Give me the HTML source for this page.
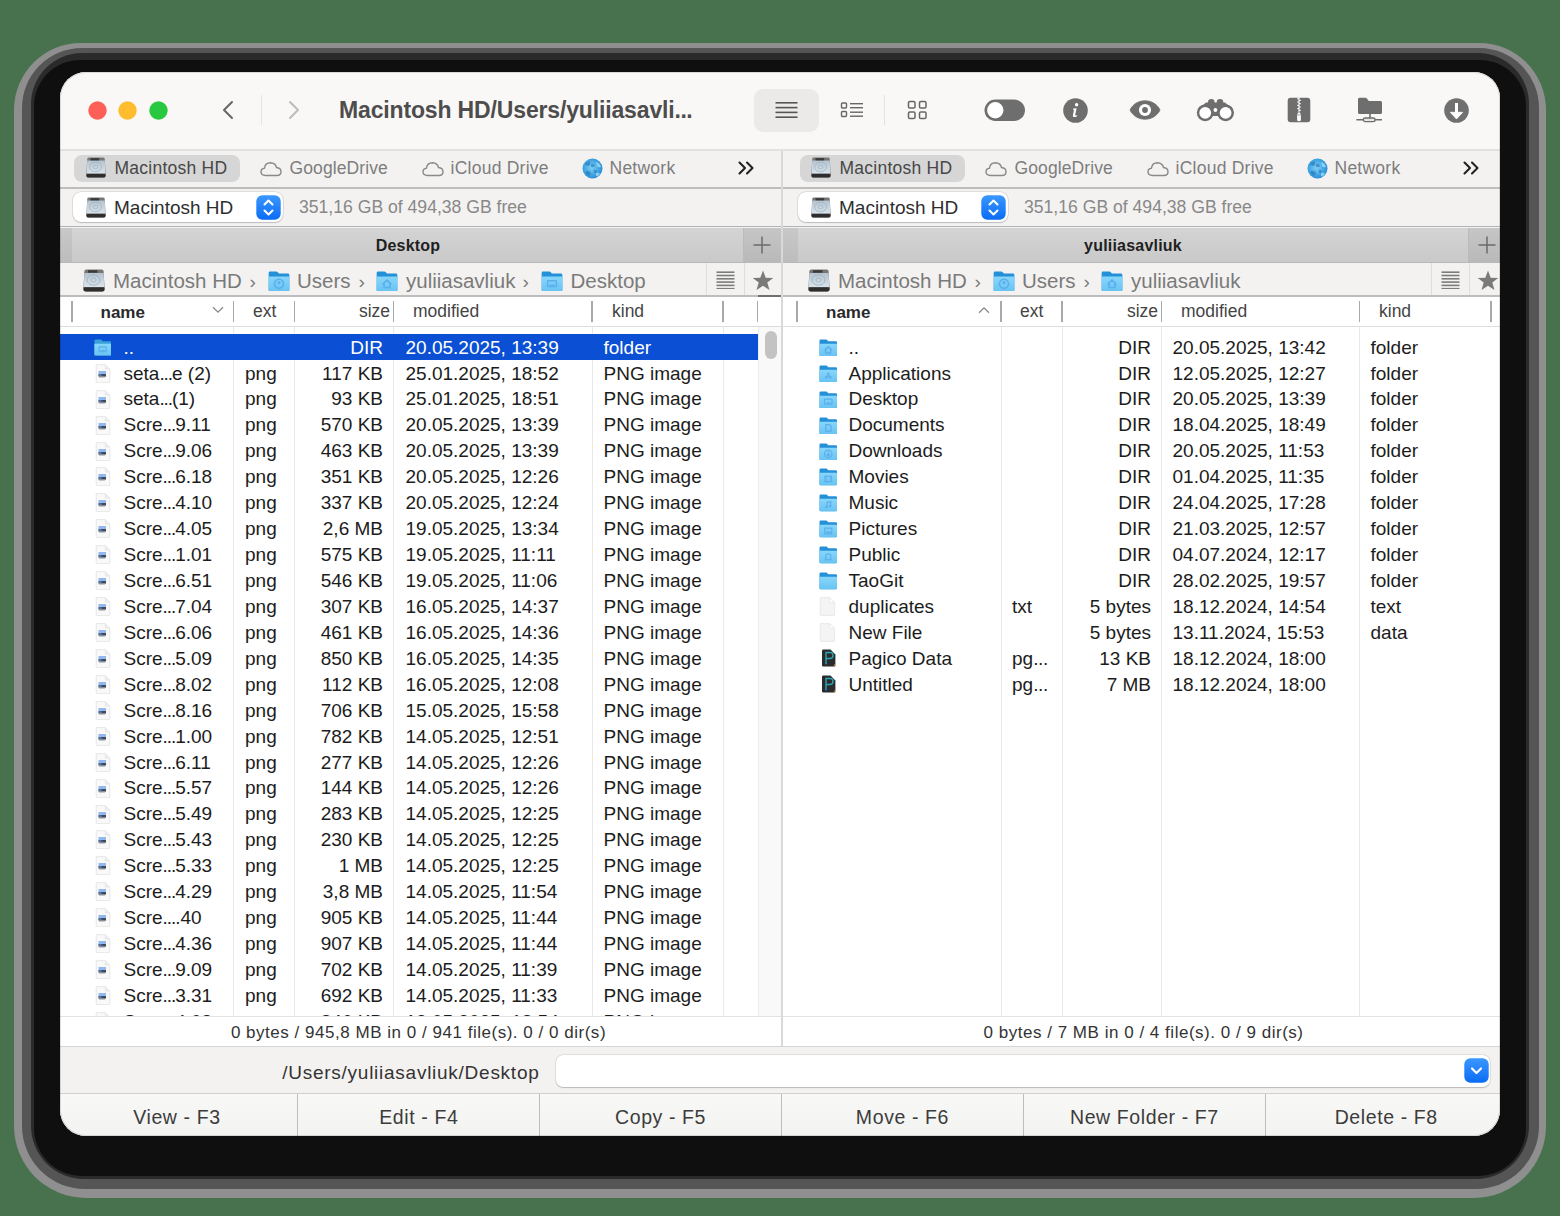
<!DOCTYPE html><html><head><meta charset="utf-8"><style>

*{margin:0;padding:0;box-sizing:border-box}
html,body{width:1560px;height:1216px;overflow:hidden;background:#48724e;font-family:"Liberation Sans",sans-serif}
.abs{position:absolute}
.sh{position:absolute}
#win{position:absolute;left:60px;top:72px;width:1440px;height:1064px;border-radius:26px;overflow:hidden;background:#f3f2f1}
.t{position:absolute;white-space:nowrap;line-height:1}
.el{letter-spacing:-1.1px}

</style></head><body>
<div class="sh" style="left:14px;top:43px;width:1532px;height:1155px;border-radius:67px 67px 72px 72px;background:#8f8f8f"></div>
<div class="sh" style="left:21.5px;top:47.5px;width:1517.0px;height:1141.5px;border-radius:60px 60px 63px 63px;background:#555555"></div>
<div class="sh" style="left:30.7px;top:52.5px;width:1498.6px;height:1126.5px;border-radius:51px 51px 53px 53px;background:#2a2a2a"></div>
<div class="sh" style="left:34px;top:59.5px;width:1492px;height:1116.5px;border-radius:46px 46px 48px 48px;background:#0f0f0f"></div>
<div id="win">
<svg width="0" height="0" style="position:absolute"><defs>
<linearGradient id="hdg" x1="0" y1="0" x2="0" y2="1"><stop offset="0" stop-color="#b3c3cf"/><stop offset="1" stop-color="#d9e5ed"/></linearGradient>
<linearGradient id="fldg" x1="0" y1="0" x2="0" y2="1"><stop offset="0" stop-color="#88d6fb"/><stop offset="1" stop-color="#68c3f2"/></linearGradient>
<linearGradient id="blueg" x1="0" y1="0" x2="0" y2="1"><stop offset="0" stop-color="#3b97ff"/><stop offset="1" stop-color="#0a6cf5"/></linearGradient>
<radialGradient id="globeg" cx="0.45" cy="0.45" r="0.6"><stop offset="0" stop-color="#7fd0f6"/><stop offset="0.7" stop-color="#3c9fe0"/><stop offset="1" stop-color="#2a86d0"/></radialGradient>
</defs></svg>
<div class="abs" style="left:0.00px;top:0.00px;width:1440.00px;height:78.00px;background:#f9f8f7"></div>
<div class="abs" style="left:0.00px;top:77.00px;width:1440.00px;height:1.50px;background:#e2e1e0"></div>
<svg class="abs" style="left:27.50px;top:28.50px;" width="19" height="19" viewBox="0 0 19 19"><circle cx="9.5" cy="9.5" r="9.2" fill="#fe5f57"/></svg>
<svg class="abs" style="left:58.00px;top:28.50px;" width="19" height="19" viewBox="0 0 19 19"><circle cx="9.5" cy="9.5" r="9.2" fill="#febc2e"/></svg>
<svg class="abs" style="left:88.50px;top:28.50px;" width="19" height="19" viewBox="0 0 19 19"><circle cx="9.5" cy="9.5" r="9.2" fill="#28c840"/></svg>
<svg class="abs" style="left:158.00px;top:28.00px;" width="20" height="20" viewBox="0 0 20 20"><path d="M14 2 L6 10 L14 18" fill="none" stroke="#666" stroke-width="2" stroke-linecap="round" stroke-linejoin="round"/></svg>
<div class="abs" style="left:200.50px;top:23.00px;width:1.00px;height:30.00px;background:#e6e5e4"></div>
<svg class="abs" style="left:224.00px;top:28.00px;" width="20" height="20" viewBox="0 0 20 20"><path d="M6 2 L14 10 L6 18" fill="none" stroke="#bcbcbc" stroke-width="2" stroke-linecap="round" stroke-linejoin="round"/></svg>
<div class="t" style="left:279.00px;top:26.53px;font-size:23px;color:#4d4d4d;font-weight:bold;letter-spacing:-0.15px">Macintosh HD/Users/yuliiasavli<span style="letter-spacing:-0.5px">...</span></div>
<div class="abs" style="left:694.00px;top:16.50px;width:64.50px;height:43.00px;background:#ebeae9;border-radius:9px"></div>
<svg class="abs" style="left:715.00px;top:29.00px;" width="23" height="18" viewBox="0 0 23 18"><rect x="0.5" y="1.0" width="22" height="1.6" fill="#555"/><rect x="0.5" y="5.8" width="22" height="1.6" fill="#555"/><rect x="0.5" y="10.6" width="22" height="1.6" fill="#555"/><rect x="0.5" y="15.4" width="22" height="1.6" fill="#555"/></svg>
<svg class="abs" style="left:780.00px;top:28.00px;" width="24" height="20" viewBox="0 0 24 20"><rect x="1.5" y="3" width="5" height="5" rx="1" fill="none" stroke="#666" stroke-width="1.4"/><rect x="1.5" y="11.5" width="5" height="5" rx="1" fill="none" stroke="#666" stroke-width="1.4"/><rect x="10" y="3" width="13" height="1.4" fill="#666"/><rect x="10" y="7" width="13" height="1.4" fill="#666"/><rect x="10" y="11.5" width="13" height="1.4" fill="#666"/><rect x="10" y="15.5" width="13" height="1.4" fill="#666"/></svg>
<div class="abs" style="left:824.00px;top:23.00px;width:1.00px;height:29.50px;background:#e3e2e1"></div>
<svg class="abs" style="left:847.00px;top:28.00px;" width="22" height="21" viewBox="0 0 22 21"><rect x="1.5" y="1.5" width="6.5" height="6.5" rx="1.3" fill="none" stroke="#666" stroke-width="1.5"/><rect x="12.5" y="1.5" width="6.5" height="6.5" rx="1.3" fill="none" stroke="#666" stroke-width="1.5"/><rect x="1.5" y="12" width="6.5" height="6.5" rx="1.3" fill="none" stroke="#666" stroke-width="1.5"/><rect x="12.5" y="12" width="6.5" height="6.5" rx="1.3" fill="none" stroke="#666" stroke-width="1.5"/></svg>
<svg class="abs" style="left:924.00px;top:26.50px;" width="42" height="23" viewBox="0 0 42 23"><rect x="0.5" y="0.5" width="40.5" height="21.5" rx="10.8" fill="#6e6e6e"/><circle cx="11.3" cy="11.3" r="8.8" fill="#fff" stroke="#6e6e6e" stroke-width="1.2"/></svg>
<svg class="abs" style="left:1002.50px;top:25.50px;" width="25" height="25" viewBox="0 0 25 25"><circle cx="12.5" cy="12.5" r="12.3" fill="#6e6e6e"/><circle cx="13.6" cy="6.8" r="1.7" fill="#fff"/><path d="M10.3 10.6 L13.6 10.2 L12.2 16.8 Q12 18 13.3 17.4 L14.2 17 L14 18.2 Q12 19.3 10.6 19 Q9.6 18.6 9.9 17.2 L11 12 L10.1 11.8 Z" fill="#fff"/></svg>
<svg class="abs" style="left:1069.00px;top:27.00px;" width="32" height="22" viewBox="0 0 32 22"><path d="M1 11 C7 -1.3 25 -1.3 31 11 C25 23.3 7 23.3 1 11 Z" fill="#6e6e6e" stroke="#6e6e6e" stroke-width="0.8" stroke-linejoin="round"/><circle cx="16" cy="11" r="6.1" fill="#fff"/><circle cx="16" cy="11" r="2.9" fill="#6e6e6e"/></svg>
<svg class="abs" style="left:1136.00px;top:26.00px;" width="39" height="24" viewBox="0 0 39 24"><g fill="#6e6e6e"><circle cx="9.2" cy="14.8" r="8.4"/><circle cx="29.6" cy="14.8" r="8.4"/><circle cx="15.3" cy="4.3" r="3.3"/><circle cx="24" cy="4.3" r="3.3"/><path d="M3 10.5 L10 4.5 L29 4.5 L36 10.5 L33 18 L6 18Z"/></g><circle cx="9.2" cy="14.8" r="5.9" fill="#fff"/><circle cx="29.6" cy="14.8" r="5.9" fill="#fff"/><circle cx="19.4" cy="12" r="1.9" fill="#fff"/></svg>
<svg class="abs" style="left:1227.00px;top:25.00px;" width="25" height="26" viewBox="0 0 25 26"><rect x="0.7" y="0.7" width="22.6" height="24.6" rx="3" fill="#6e6e6e"/><rect x="11.5" y="0" width="1" height="15" fill="#fff"/><rect x="10.2" y="1.20" width="1.9" height="1.05" fill="#fff"/><rect x="11.9" y="2.85" width="1.9" height="1.05" fill="#fff"/><rect x="10.2" y="4.50" width="1.9" height="1.05" fill="#fff"/><rect x="11.9" y="6.15" width="1.9" height="1.05" fill="#fff"/><rect x="10.2" y="7.80" width="1.9" height="1.05" fill="#fff"/><rect x="11.9" y="9.45" width="1.9" height="1.05" fill="#fff"/><rect x="10.2" y="11.10" width="1.9" height="1.05" fill="#fff"/><rect x="11.9" y="12.75" width="1.9" height="1.05" fill="#fff"/><path d="M10.1 23.6 Q9.7 19 10.9 15.6 L13.1 15.6 Q14.3 19 13.9 23.6 Q12 25 10.1 23.6Z" fill="#fff"/><circle cx="12" cy="18" r="0.7" fill="#6e6e6e"/></svg>
<svg class="abs" style="left:1295.00px;top:25.00px;" width="28" height="26" viewBox="0 0 28 26"><path d="M3 2.3 Q3 0.8 4.5 0.8 L10.5 0.8 Q11.3 0.8 11.9 1.5 L13.8 4 L25.5 4 Q27 4 27 5.5 L27 15.5 Q27 17 25.5 17 L4.5 17 Q3 17 3 15.5 Z" fill="#6e6e6e"/><rect x="14.2" y="16.5" width="1.6" height="5" fill="#6e6e6e"/><rect x="1.4" y="22" width="25.6" height="1.5" fill="#6e6e6e"/><rect x="8.3" y="21" width="11.8" height="3.7" rx="1.85" fill="#e6e6e6" stroke="#6e6e6e" stroke-width="1.3"/></svg>
<svg class="abs" style="left:1384.00px;top:25.50px;" width="25" height="25" viewBox="0 0 25 25"><circle cx="12.5" cy="12.5" r="12.3" fill="#707070"/><rect x="11" y="5" width="3" height="10" fill="#fff"/><path d="M6.3 14.3 L18.7 14.3 L12.5 21 Z" fill="#fff" stroke="#fff" stroke-width="0.8" stroke-linejoin="round"/></svg>
<div class="abs" style="left:0.00px;top:78.50px;width:1440.00px;height:37.00px;background:#f3f2f1"></div>
<div class="abs" style="left:14.00px;top:82.50px;width:166.00px;height:27.00px;background:#d6d6d6;border-radius:8px"></div>
<svg class="abs" style="left:26.00px;top:85.00px;width:20px;height:21px" width="22" height="23" viewBox="0 0 22 23"><path d="M3.2 0.5 H18.8 Q20.3 0.5 20.6 2 L21.6 19.5 Q21.8 22.5 19 22.5 H3 Q0.2 22.5 0.4 19.5 L1.4 2 Q1.7 0.5 3.2 0.5Z" fill="#767676"/><path d="M1.3 3.9 H20.7 L21.2 18.3 H0.8 Z" fill="url(#hdg)"/><rect x="5" y="1.2" width="9.5" height="2.5" fill="#3a3a3a"/><ellipse cx="10.5" cy="11" rx="6.5" ry="5.2" fill="none" stroke="#a3b3bf" stroke-width="0.9"/><ellipse cx="10.5" cy="11" rx="2.6" ry="2.1" fill="none" stroke="#a3b3bf" stroke-width="0.8"/><path d="M0.7 18.3 H21.3 L21.5 20 Q21.7 22.5 19 22.5 H3 Q0.3 22.5 0.5 20Z" fill="#2e2e2e"/></svg>
<div class="t" style="left:54.50px;top:87.69px;font-size:17.5px;color:#474747;font-weight:normal;letter-spacing:0.25px">Macintosh HD</div>
<svg class="abs" style="left:199.50px;top:88.50px;" width="22" height="16" viewBox="0 0 22 16"><path d="M5.5 14.5 Q1 14.5 1 10.8 Q1 7.5 4.5 7.2 Q5 2 10.5 1.8 Q15.5 2 16.5 6.5 Q21 7 21 10.8 Q21 14.5 17 14.5 Z" fill="none" stroke="#8a8a8a" stroke-width="1.4" stroke-linejoin="round"/></svg>
<div class="t" style="left:229.50px;top:87.69px;font-size:17.5px;color:#7d7d7d;font-weight:normal;letter-spacing:0.1px">GoogleDrive</div>
<svg class="abs" style="left:361.50px;top:88.50px;" width="22" height="16" viewBox="0 0 22 16"><path d="M5.5 14.5 Q1 14.5 1 10.8 Q1 7.5 4.5 7.2 Q5 2 10.5 1.8 Q15.5 2 16.5 6.5 Q21 7 21 10.8 Q21 14.5 17 14.5 Z" fill="none" stroke="#8a8a8a" stroke-width="1.4" stroke-linejoin="round"/></svg>
<div class="t" style="left:390.50px;top:87.69px;font-size:17.5px;color:#7d7d7d;font-weight:normal;letter-spacing:0.25px">iCloud Drive</div>
<svg class="abs" style="left:521.50px;top:85.50px;" width="21" height="21" viewBox="0 0 21 21"><circle cx="10.5" cy="10.5" r="10" fill="url(#globeg)"/><path d="M3 6 Q5 3 8 3.5 Q9 6 7 8 Q4 8 3 6Z M9 6 Q12 5 13 8 Q11 10 9 9Z M4 13 Q7 12 9 15 Q8 19 5 17 Q3 15 4 13Z M12 12 Q14 11 15 14 Q13 16 12 14Z" fill="#1f6fb0" opacity="0.55"/><path d="M14 4 Q18 5 19 9 Q17 10 15 8Z M14 15 Q17 14 18 16 Q16 19 14 18Z" fill="#a6e4ff" opacity="0.7"/></svg>
<div class="t" style="left:549.50px;top:87.69px;font-size:17.5px;color:#7d7d7d;font-weight:normal;letter-spacing:0.25px">Network</div>
<svg class="abs" style="left:678.00px;top:89.00px;" width="17" height="14" viewBox="0 0 17 14"><path d="M1.5 1.5 L7 7 L1.5 12.5 M9 1.5 L14.5 7 L9 12.5" fill="none" stroke="#222" stroke-width="2.1" stroke-linecap="round" stroke-linejoin="round"/></svg>
<div class="abs" style="left:0.00px;top:115.00px;width:1440.00px;height:2.00px;background:#bdbdbd"></div>
<div class="abs" style="left:0.00px;top:117.00px;width:1440.00px;height:37.00px;background:#f3f2f1"></div>
<div class="abs" style="left:0.00px;top:153.80px;width:1440.00px;height:1.70px;background:#b3b3b3"></div>
<div class="abs" style="left:12.80px;top:119.70px;width:210.20px;height:30.60px;background:#fff;border-radius:8px;box-shadow:0 0 0 0.6px rgba(0,0,0,0.12),0 0.6px 1.2px rgba(0,0,0,0.18)"></div>
<svg class="abs" style="left:26.00px;top:124.50px;width:20px;height:21px" width="22" height="23" viewBox="0 0 22 23"><path d="M3.2 0.5 H18.8 Q20.3 0.5 20.6 2 L21.6 19.5 Q21.8 22.5 19 22.5 H3 Q0.2 22.5 0.4 19.5 L1.4 2 Q1.7 0.5 3.2 0.5Z" fill="#767676"/><path d="M1.3 3.9 H20.7 L21.2 18.3 H0.8 Z" fill="url(#hdg)"/><rect x="5" y="1.2" width="9.5" height="2.5" fill="#3a3a3a"/><ellipse cx="10.5" cy="11" rx="6.5" ry="5.2" fill="none" stroke="#a3b3bf" stroke-width="0.9"/><ellipse cx="10.5" cy="11" rx="2.6" ry="2.1" fill="none" stroke="#a3b3bf" stroke-width="0.8"/><path d="M0.7 18.3 H21.3 L21.5 20 Q21.7 22.5 19 22.5 H3 Q0.3 22.5 0.5 20Z" fill="#2e2e2e"/></svg>
<div class="t" style="left:54.00px;top:125.52px;font-size:19px;color:#2e2e2e;font-weight:normal;">Macintosh HD</div>
<svg class="abs" style="left:195.50px;top:122.50px;" width="25" height="25" viewBox="0 0 25 25"><rect x="0.3" y="0.3" width="24.4" height="24.4" rx="6" fill="url(#blueg)"/><path d="M8.5 9.5 L12.5 5.5 L16.5 9.5 M8.5 15.5 L12.5 19.5 L16.5 15.5" fill="none" stroke="#fff" stroke-width="2" stroke-linecap="round" stroke-linejoin="round"/></svg>
<div class="t" style="left:239.00px;top:126.60px;font-size:17.6px;color:#888;font-weight:normal;">351,16 GB of 494,38 GB free</div>
<div class="abs" style="left:0.00px;top:155.50px;width:721.00px;height:34.00px;background:linear-gradient(#d4d4d4,#c9c9c9)"></div>
<div class="abs" style="left:0.00px;top:155.50px;width:12.00px;height:34.00px;background:linear-gradient(#c8c8c8,#bdbdbd)"></div>
<div class="abs" style="left:683.00px;top:155.50px;width:38.00px;height:34.00px;background:linear-gradient(#c6c6c6,#b9b9b9);border-left:1px solid #bbb"></div>
<svg class="abs" style="left:692.00px;top:163.00px;" width="20" height="20" viewBox="0 0 20 20"><path d="M10 1.5 V18.5 M1.5 10 H18.5" stroke="#6b6b6b" stroke-width="1.5"/></svg>
<div class="t" style="left:-52.00px;width:800px;text-align:center;top:166.46px;font-size:16px;color:#1f1f1f;font-weight:bold;letter-spacing:0.2px">Desktop</div>
<div class="abs" style="left:0.00px;top:189.50px;width:721.00px;height:1.00px;background:#b8b8b8"></div>
<div class="abs" style="left:0.00px;top:190.50px;width:721.00px;height:33.00px;background:#f3f2f1"></div>
<svg class="abs" style="left:23.00px;top:197.00px;width:22px;height:23px" width="22" height="23" viewBox="0 0 22 23"><path d="M3.2 0.5 H18.8 Q20.3 0.5 20.6 2 L21.6 19.5 Q21.8 22.5 19 22.5 H3 Q0.2 22.5 0.4 19.5 L1.4 2 Q1.7 0.5 3.2 0.5Z" fill="#767676"/><path d="M1.3 3.9 H20.7 L21.2 18.3 H0.8 Z" fill="url(#hdg)"/><rect x="5" y="1.2" width="9.5" height="2.5" fill="#3a3a3a"/><ellipse cx="10.5" cy="11" rx="6.5" ry="5.2" fill="none" stroke="#a3b3bf" stroke-width="0.9"/><ellipse cx="10.5" cy="11" rx="2.6" ry="2.1" fill="none" stroke="#a3b3bf" stroke-width="0.8"/><path d="M0.7 18.3 H21.3 L21.5 20 Q21.7 22.5 19 22.5 H3 Q0.3 22.5 0.5 20Z" fill="#2e2e2e"/></svg>
<div class="t" style="left:53.00px;top:198.85px;font-size:20.5px;color:#7a7a7a;font-weight:normal;">Macintosh HD</div>
<div class="t" style="left:189.50px;top:199.92px;font-size:19px;color:#7a7a7a;font-weight:normal;">›</div>
<svg class="abs" style="left:207.70px;top:198.80px;width:22px;height:20.7px" width="22" height="21" viewBox="0 0 22 21"><path d="M0.5 2 Q0.5 0.5 2 0.5 H8.3 Q9 0.5 9.5 1 L11 2.6 H20 Q21.5 2.6 21.5 4 V19.3 Q21.5 20.7 20 20.7 H2 Q0.5 20.7 0.5 19.3Z" fill="#2490d8"/><path d="M0.5 6.6 Q0.5 5.7 1.4 5.7 H20.6 Q21.5 5.7 21.5 6.6 V19.3 Q21.5 20.7 20 20.7 H2 Q0.5 20.7 0.5 19.3Z" fill="url(#fldg)"/><circle cx="11" cy="13" r="4.6" fill="none" stroke="#5aafec" stroke-width="1.7"/><circle cx="11" cy="11.8" r="1.7" fill="#5aafec"/></svg>
<div class="t" style="left:237.00px;top:198.85px;font-size:20.5px;color:#7a7a7a;font-weight:normal;">Users</div>
<div class="t" style="left:298.50px;top:199.92px;font-size:19px;color:#7a7a7a;font-weight:normal;">›</div>
<svg class="abs" style="left:315.50px;top:198.80px;width:22px;height:20.7px" width="22" height="21" viewBox="0 0 22 21"><path d="M0.5 2 Q0.5 0.5 2 0.5 H8.3 Q9 0.5 9.5 1 L11 2.6 H20 Q21.5 2.6 21.5 4 V19.3 Q21.5 20.7 20 20.7 H2 Q0.5 20.7 0.5 19.3Z" fill="#2490d8"/><path d="M0.5 6.6 Q0.5 5.7 1.4 5.7 H20.6 Q21.5 5.7 21.5 6.6 V19.3 Q21.5 20.7 20 20.7 H2 Q0.5 20.7 0.5 19.3Z" fill="url(#fldg)"/><path d="M6.5 13.5 L11 9.3 L15.5 13.5 M8 12.5 V16.8 H14 V12.5" fill="none" stroke="#5aafec" stroke-width="1.6"/></svg>
<div class="t" style="left:346.00px;top:198.85px;font-size:20.5px;color:#7a7a7a;font-weight:normal;">yuliiasavliuk</div>
<div class="t" style="left:462.50px;top:199.92px;font-size:19px;color:#7a7a7a;font-weight:normal;">›</div>
<svg class="abs" style="left:480.50px;top:198.80px;width:22px;height:20.7px" width="22" height="21" viewBox="0 0 22 21"><path d="M0.5 2 Q0.5 0.5 2 0.5 H8.3 Q9 0.5 9.5 1 L11 2.6 H20 Q21.5 2.6 21.5 4 V19.3 Q21.5 20.7 20 20.7 H2 Q0.5 20.7 0.5 19.3Z" fill="#2490d8"/><path d="M0.5 6.6 Q0.5 5.7 1.4 5.7 H20.6 Q21.5 5.7 21.5 6.6 V19.3 Q21.5 20.7 20 20.7 H2 Q0.5 20.7 0.5 19.3Z" fill="url(#fldg)"/><rect x="6.5" y="9.8" width="9" height="6" rx="0.6" fill="none" stroke="#5aafec" stroke-width="1.5"/><rect x="8.5" y="13.6" width="5" height="1.3" fill="#5aafec"/></svg>
<div class="t" style="left:510.50px;top:198.85px;font-size:20.5px;color:#7a7a7a;font-weight:normal;">Desktop</div>
<div class="abs" style="left:646.00px;top:190.50px;width:1.00px;height:33.00px;background:#dedede"></div>
<svg class="abs" style="left:656.00px;top:198.50px;" width="19" height="18" viewBox="0 0 19 18"><rect x="0.5" y="0.4" width="18" height="1.6" fill="#7c7c7c"/><rect x="0.5" y="3.7" width="18" height="1.6" fill="#7c7c7c"/><rect x="0.5" y="7.0" width="18" height="1.6" fill="#7c7c7c"/><rect x="0.5" y="10.3" width="18" height="1.6" fill="#7c7c7c"/><rect x="0.5" y="13.6" width="18" height="1.6" fill="#7c7c7c"/><rect x="0.5" y="16.9" width="18" height="1.6" fill="#7c7c7c"/></svg>
<div class="abs" style="left:683.50px;top:190.50px;width:1.00px;height:33.00px;background:#dedede"></div>
<svg class="abs" style="left:692.00px;top:198.00px;" width="22" height="21" viewBox="0 0 22 21"><path d="M11 0.5 L13.7 7.7 L21.3 7.9 L15.3 12.6 L17.5 20 L11 15.7 L4.5 20 L6.7 12.6 L0.7 7.9 L8.3 7.7 Z" fill="#7a7a7a"/></svg>
<div class="abs" style="left:0.00px;top:223.30px;width:721.00px;height:1.70px;background:#bdbdbd"></div>
<div class="abs" style="left:698.00px;top:223.00px;width:23.00px;height:2.00px;background:#707070"></div>
<div class="abs" style="left:0.00px;top:225.00px;width:721.00px;height:29.00px;background:#fff"></div>
<div class="abs" style="left:0.00px;top:253.50px;width:721.00px;height:1.50px;background:#dcdcdc"></div>
<div class="abs" style="left:11.40px;top:229.00px;width:1.20px;height:20.50px;background:#a9a9a9"></div>
<div class="abs" style="left:173.20px;top:229.00px;width:1.20px;height:20.50px;background:#a9a9a9"></div>
<div class="abs" style="left:234.00px;top:229.00px;width:1.20px;height:20.50px;background:#a9a9a9"></div>
<div class="abs" style="left:333.20px;top:229.00px;width:1.20px;height:20.50px;background:#a9a9a9"></div>
<div class="abs" style="left:531.40px;top:229.00px;width:1.20px;height:20.50px;background:#a9a9a9"></div>
<div class="abs" style="left:662.40px;top:229.00px;width:1.20px;height:20.50px;background:#a9a9a9"></div>
<div class="abs" style="left:697.10px;top:229.00px;width:1.20px;height:20.50px;background:#a9a9a9"></div>
<div class="t" style="left:40.50px;top:231.61px;font-size:17px;color:#2a2a2a;font-weight:bold;">name</div>
<svg class="abs" style="left:152.00px;top:234.00px;" width="12" height="8" viewBox="0 0 12 8"><path d="M1 1.2 L6 6.2 L11 1.2" fill="none" stroke="#888" stroke-width="1.3"/></svg>
<div class="t" style="left:193.00px;top:231.19px;font-size:17.5px;color:#444;font-weight:normal;">ext</div>
<div class="t" style="right:1110.00px;top:231.19px;font-size:17.5px;color:#444;font-weight:normal;">size</div>
<div class="t" style="left:353.00px;top:231.19px;font-size:17.5px;color:#444;font-weight:normal;">modified</div>
<div class="t" style="left:552.00px;top:231.19px;font-size:17.5px;color:#444;font-weight:normal;">kind</div>
<div class="abs" style="left:0.00px;top:255.00px;width:721.00px;height:689.00px;background:#fff"></div>
<div class="abs" style="left:173.30px;top:255.00px;width:1.00px;height:689.00px;background:#e9e9e9"></div>
<div class="abs" style="left:234.10px;top:255.00px;width:1.00px;height:689.00px;background:#e9e9e9"></div>
<div class="abs" style="left:333.30px;top:255.00px;width:1.00px;height:689.00px;background:#e9e9e9"></div>
<div class="abs" style="left:531.50px;top:255.00px;width:1.00px;height:689.00px;background:#e9e9e9"></div>
<div class="abs" style="left:662.50px;top:255.00px;width:1.00px;height:689.00px;background:#e9e9e9"></div>
<div class="abs" style="left:740.00px;top:82.50px;width:165.00px;height:27.00px;background:#d6d6d6;border-radius:8px"></div>
<svg class="abs" style="left:751.00px;top:85.00px;width:20px;height:21px" width="22" height="23" viewBox="0 0 22 23"><path d="M3.2 0.5 H18.8 Q20.3 0.5 20.6 2 L21.6 19.5 Q21.8 22.5 19 22.5 H3 Q0.2 22.5 0.4 19.5 L1.4 2 Q1.7 0.5 3.2 0.5Z" fill="#767676"/><path d="M1.3 3.9 H20.7 L21.2 18.3 H0.8 Z" fill="url(#hdg)"/><rect x="5" y="1.2" width="9.5" height="2.5" fill="#3a3a3a"/><ellipse cx="10.5" cy="11" rx="6.5" ry="5.2" fill="none" stroke="#a3b3bf" stroke-width="0.9"/><ellipse cx="10.5" cy="11" rx="2.6" ry="2.1" fill="none" stroke="#a3b3bf" stroke-width="0.8"/><path d="M0.7 18.3 H21.3 L21.5 20 Q21.7 22.5 19 22.5 H3 Q0.3 22.5 0.5 20Z" fill="#2e2e2e"/></svg>
<div class="t" style="left:779.50px;top:87.69px;font-size:17.5px;color:#474747;font-weight:normal;letter-spacing:0.25px">Macintosh HD</div>
<svg class="abs" style="left:924.50px;top:88.50px;" width="22" height="16" viewBox="0 0 22 16"><path d="M5.5 14.5 Q1 14.5 1 10.8 Q1 7.5 4.5 7.2 Q5 2 10.5 1.8 Q15.5 2 16.5 6.5 Q21 7 21 10.8 Q21 14.5 17 14.5 Z" fill="none" stroke="#8a8a8a" stroke-width="1.4" stroke-linejoin="round"/></svg>
<div class="t" style="left:954.50px;top:87.69px;font-size:17.5px;color:#7d7d7d;font-weight:normal;letter-spacing:0.1px">GoogleDrive</div>
<svg class="abs" style="left:1086.50px;top:88.50px;" width="22" height="16" viewBox="0 0 22 16"><path d="M5.5 14.5 Q1 14.5 1 10.8 Q1 7.5 4.5 7.2 Q5 2 10.5 1.8 Q15.5 2 16.5 6.5 Q21 7 21 10.8 Q21 14.5 17 14.5 Z" fill="none" stroke="#8a8a8a" stroke-width="1.4" stroke-linejoin="round"/></svg>
<div class="t" style="left:1115.50px;top:87.69px;font-size:17.5px;color:#7d7d7d;font-weight:normal;letter-spacing:0.25px">iCloud Drive</div>
<svg class="abs" style="left:1246.50px;top:85.50px;" width="21" height="21" viewBox="0 0 21 21"><circle cx="10.5" cy="10.5" r="10" fill="url(#globeg)"/><path d="M3 6 Q5 3 8 3.5 Q9 6 7 8 Q4 8 3 6Z M9 6 Q12 5 13 8 Q11 10 9 9Z M4 13 Q7 12 9 15 Q8 19 5 17 Q3 15 4 13Z M12 12 Q14 11 15 14 Q13 16 12 14Z" fill="#1f6fb0" opacity="0.55"/><path d="M14 4 Q18 5 19 9 Q17 10 15 8Z M14 15 Q17 14 18 16 Q16 19 14 18Z" fill="#a6e4ff" opacity="0.7"/></svg>
<div class="t" style="left:1274.50px;top:87.69px;font-size:17.5px;color:#7d7d7d;font-weight:normal;letter-spacing:0.25px">Network</div>
<svg class="abs" style="left:1403.00px;top:89.00px;" width="17" height="14" viewBox="0 0 17 14"><path d="M1.5 1.5 L7 7 L1.5 12.5 M9 1.5 L14.5 7 L9 12.5" fill="none" stroke="#222" stroke-width="2.1" stroke-linecap="round" stroke-linejoin="round"/></svg>
<div class="abs" style="left:737.80px;top:119.70px;width:210.20px;height:30.60px;background:#fff;border-radius:8px;box-shadow:0 0 0 0.6px rgba(0,0,0,0.12),0 0.6px 1.2px rgba(0,0,0,0.18)"></div>
<svg class="abs" style="left:751.00px;top:124.50px;width:20px;height:21px" width="22" height="23" viewBox="0 0 22 23"><path d="M3.2 0.5 H18.8 Q20.3 0.5 20.6 2 L21.6 19.5 Q21.8 22.5 19 22.5 H3 Q0.2 22.5 0.4 19.5 L1.4 2 Q1.7 0.5 3.2 0.5Z" fill="#767676"/><path d="M1.3 3.9 H20.7 L21.2 18.3 H0.8 Z" fill="url(#hdg)"/><rect x="5" y="1.2" width="9.5" height="2.5" fill="#3a3a3a"/><ellipse cx="10.5" cy="11" rx="6.5" ry="5.2" fill="none" stroke="#a3b3bf" stroke-width="0.9"/><ellipse cx="10.5" cy="11" rx="2.6" ry="2.1" fill="none" stroke="#a3b3bf" stroke-width="0.8"/><path d="M0.7 18.3 H21.3 L21.5 20 Q21.7 22.5 19 22.5 H3 Q0.3 22.5 0.5 20Z" fill="#2e2e2e"/></svg>
<div class="t" style="left:779.00px;top:125.52px;font-size:19px;color:#2e2e2e;font-weight:normal;">Macintosh HD</div>
<svg class="abs" style="left:920.50px;top:122.50px;" width="25" height="25" viewBox="0 0 25 25"><rect x="0.3" y="0.3" width="24.4" height="24.4" rx="6" fill="url(#blueg)"/><path d="M8.5 9.5 L12.5 5.5 L16.5 9.5 M8.5 15.5 L12.5 19.5 L16.5 15.5" fill="none" stroke="#fff" stroke-width="2" stroke-linecap="round" stroke-linejoin="round"/></svg>
<div class="t" style="left:964.00px;top:126.60px;font-size:17.6px;color:#888;font-weight:normal;">351,16 GB of 494,38 GB free</div>
<div class="abs" style="left:722.50px;top:155.50px;width:717.50px;height:34.00px;background:linear-gradient(#d4d4d4,#c9c9c9)"></div>
<div class="abs" style="left:722.50px;top:155.50px;width:15.30px;height:34.00px;background:linear-gradient(#c8c8c8,#bdbdbd)"></div>
<div class="abs" style="left:1408.00px;top:155.50px;width:32.00px;height:34.00px;background:linear-gradient(#c6c6c6,#b9b9b9);border-left:1px solid #bbb"></div>
<svg class="abs" style="left:1417.00px;top:163.00px;" width="20" height="20" viewBox="0 0 20 20"><path d="M10 1.5 V18.5 M1.5 10 H18.5" stroke="#6b6b6b" stroke-width="1.5"/></svg>
<div class="t" style="left:673.00px;width:800px;text-align:center;top:166.46px;font-size:16px;color:#1f1f1f;font-weight:bold;letter-spacing:0.2px">yuliiasavliuk</div>
<div class="abs" style="left:722.50px;top:189.50px;width:717.50px;height:1.00px;background:#b8b8b8"></div>
<div class="abs" style="left:722.50px;top:190.50px;width:717.50px;height:33.00px;background:#f3f2f1"></div>
<svg class="abs" style="left:748.00px;top:197.00px;width:22px;height:23px" width="22" height="23" viewBox="0 0 22 23"><path d="M3.2 0.5 H18.8 Q20.3 0.5 20.6 2 L21.6 19.5 Q21.8 22.5 19 22.5 H3 Q0.2 22.5 0.4 19.5 L1.4 2 Q1.7 0.5 3.2 0.5Z" fill="#767676"/><path d="M1.3 3.9 H20.7 L21.2 18.3 H0.8 Z" fill="url(#hdg)"/><rect x="5" y="1.2" width="9.5" height="2.5" fill="#3a3a3a"/><ellipse cx="10.5" cy="11" rx="6.5" ry="5.2" fill="none" stroke="#a3b3bf" stroke-width="0.9"/><ellipse cx="10.5" cy="11" rx="2.6" ry="2.1" fill="none" stroke="#a3b3bf" stroke-width="0.8"/><path d="M0.7 18.3 H21.3 L21.5 20 Q21.7 22.5 19 22.5 H3 Q0.3 22.5 0.5 20Z" fill="#2e2e2e"/></svg>
<div class="t" style="left:778.00px;top:198.85px;font-size:20.5px;color:#7a7a7a;font-weight:normal;">Macintosh HD</div>
<div class="t" style="left:914.50px;top:199.92px;font-size:19px;color:#7a7a7a;font-weight:normal;">›</div>
<svg class="abs" style="left:932.70px;top:198.80px;width:22px;height:20.7px" width="22" height="21" viewBox="0 0 22 21"><path d="M0.5 2 Q0.5 0.5 2 0.5 H8.3 Q9 0.5 9.5 1 L11 2.6 H20 Q21.5 2.6 21.5 4 V19.3 Q21.5 20.7 20 20.7 H2 Q0.5 20.7 0.5 19.3Z" fill="#2490d8"/><path d="M0.5 6.6 Q0.5 5.7 1.4 5.7 H20.6 Q21.5 5.7 21.5 6.6 V19.3 Q21.5 20.7 20 20.7 H2 Q0.5 20.7 0.5 19.3Z" fill="url(#fldg)"/><circle cx="11" cy="13" r="4.6" fill="none" stroke="#5aafec" stroke-width="1.7"/><circle cx="11" cy="11.8" r="1.7" fill="#5aafec"/></svg>
<div class="t" style="left:962.00px;top:198.85px;font-size:20.5px;color:#7a7a7a;font-weight:normal;">Users</div>
<div class="t" style="left:1023.50px;top:199.92px;font-size:19px;color:#7a7a7a;font-weight:normal;">›</div>
<svg class="abs" style="left:1040.50px;top:198.80px;width:22px;height:20.7px" width="22" height="21" viewBox="0 0 22 21"><path d="M0.5 2 Q0.5 0.5 2 0.5 H8.3 Q9 0.5 9.5 1 L11 2.6 H20 Q21.5 2.6 21.5 4 V19.3 Q21.5 20.7 20 20.7 H2 Q0.5 20.7 0.5 19.3Z" fill="#2490d8"/><path d="M0.5 6.6 Q0.5 5.7 1.4 5.7 H20.6 Q21.5 5.7 21.5 6.6 V19.3 Q21.5 20.7 20 20.7 H2 Q0.5 20.7 0.5 19.3Z" fill="url(#fldg)"/><path d="M6.5 13.5 L11 9.3 L15.5 13.5 M8 12.5 V16.8 H14 V12.5" fill="none" stroke="#5aafec" stroke-width="1.6"/></svg>
<div class="t" style="left:1071.00px;top:198.85px;font-size:20.5px;color:#7a7a7a;font-weight:normal;">yuliiasavliuk</div>
<div class="abs" style="left:1371.00px;top:190.50px;width:1.00px;height:33.00px;background:#dedede"></div>
<svg class="abs" style="left:1381.00px;top:198.50px;" width="19" height="18" viewBox="0 0 19 18"><rect x="0.5" y="0.4" width="18" height="1.6" fill="#7c7c7c"/><rect x="0.5" y="3.7" width="18" height="1.6" fill="#7c7c7c"/><rect x="0.5" y="7.0" width="18" height="1.6" fill="#7c7c7c"/><rect x="0.5" y="10.3" width="18" height="1.6" fill="#7c7c7c"/><rect x="0.5" y="13.6" width="18" height="1.6" fill="#7c7c7c"/><rect x="0.5" y="16.9" width="18" height="1.6" fill="#7c7c7c"/></svg>
<div class="abs" style="left:1408.50px;top:190.50px;width:1.00px;height:33.00px;background:#dedede"></div>
<svg class="abs" style="left:1417.00px;top:198.00px;" width="22" height="21" viewBox="0 0 22 21"><path d="M11 0.5 L13.7 7.7 L21.3 7.9 L15.3 12.6 L17.5 20 L11 15.7 L4.5 20 L6.7 12.6 L0.7 7.9 L8.3 7.7 Z" fill="#7a7a7a"/></svg>
<div class="abs" style="left:722.50px;top:223.30px;width:717.50px;height:1.70px;background:#bdbdbd"></div>
<div class="abs" style="left:722.50px;top:225.00px;width:717.50px;height:29.00px;background:#fff"></div>
<div class="abs" style="left:722.50px;top:253.50px;width:717.50px;height:1.50px;background:#dcdcdc"></div>
<div class="abs" style="left:736.40px;top:229.00px;width:1.20px;height:20.50px;background:#a9a9a9"></div>
<div class="abs" style="left:940.40px;top:229.00px;width:1.20px;height:20.50px;background:#a9a9a9"></div>
<div class="abs" style="left:1001.40px;top:229.00px;width:1.20px;height:20.50px;background:#a9a9a9"></div>
<div class="abs" style="left:1100.70px;top:229.00px;width:1.20px;height:20.50px;background:#a9a9a9"></div>
<div class="abs" style="left:1298.90px;top:229.00px;width:1.20px;height:20.50px;background:#a9a9a9"></div>
<div class="abs" style="left:1430.40px;top:229.00px;width:1.20px;height:20.50px;background:#a9a9a9"></div>
<div class="t" style="left:766.00px;top:231.61px;font-size:17px;color:#2a2a2a;font-weight:bold;">name</div>
<svg class="abs" style="left:918.00px;top:234.00px;" width="12" height="8" viewBox="0 0 12 8"><path d="M1 6.8 L6 1.8 L11 6.8" fill="none" stroke="#888" stroke-width="1.3"/></svg>
<div class="t" style="left:960.00px;top:231.19px;font-size:17.5px;color:#444;font-weight:normal;">ext</div>
<div class="t" style="right:342.00px;top:231.19px;font-size:17.5px;color:#444;font-weight:normal;">size</div>
<div class="t" style="left:1121.00px;top:231.19px;font-size:17.5px;color:#444;font-weight:normal;">modified</div>
<div class="t" style="left:1319.00px;top:231.19px;font-size:17.5px;color:#444;font-weight:normal;">kind</div>
<div class="abs" style="left:722.50px;top:255.00px;width:717.50px;height:689.00px;background:#fff"></div>
<div class="abs" style="left:940.50px;top:255.00px;width:1.00px;height:689.00px;background:#e9e9e9"></div>
<div class="abs" style="left:1001.50px;top:255.00px;width:1.00px;height:689.00px;background:#e9e9e9"></div>
<div class="abs" style="left:1100.80px;top:255.00px;width:1.00px;height:689.00px;background:#e9e9e9"></div>
<div class="abs" style="left:1299.00px;top:255.00px;width:1.00px;height:689.00px;background:#e9e9e9"></div>
<div class="abs" style="left:0;top:255px;width:1440px;height:689px;overflow:hidden">
<div class="abs" style="left:0.00px;top:7.00px;width:698.00px;height:26.10px;background:#0a4fd4"></div>
<svg class="abs" style="left:33.80px;top:12.00px;width:17.5px;height:17px" width="22" height="21" viewBox="0 0 22 21"><path d="M0.5 2 Q0.5 0.5 2 0.5 H8.3 Q9 0.5 9.5 1 L11 2.6 H20 Q21.5 2.6 21.5 4 V19.3 Q21.5 20.7 20 20.7 H2 Q0.5 20.7 0.5 19.3Z" fill="#3aa0d8"/><path d="M0.5 6.6 Q0.5 5.7 1.4 5.7 H20.6 Q21.5 5.7 21.5 6.6 V19.3 Q21.5 20.7 20 20.7 H2 Q0.5 20.7 0.5 19.3Z" fill="url(#fldg)"/><rect x="6.5" y="9.8" width="9" height="6" rx="0.6" fill="none" stroke="#5aafec" stroke-width="1.5"/><rect x="8.5" y="13.6" width="5" height="1.3" fill="#5aafec"/></svg>
<div class="t" style="left:63.50px;top:10.62px;font-size:19px;color:#fff;font-weight:normal;">..</div>
<div class="t" style="left:185.00px;top:10.62px;font-size:19px;color:#fff;font-weight:normal;"></div>
<div class="t" style="right:1117.00px;top:10.62px;font-size:19px;color:#fff;font-weight:normal;">DIR</div>
<div class="t" style="left:345.50px;top:10.62px;font-size:19px;color:#fff;font-weight:normal;">20.05.2025, 13:39</div>
<div class="t" style="left:543.50px;top:10.62px;font-size:19px;color:#fff;font-weight:normal;">folder</div>
<svg class="abs" style="left:34.50px;top:36.73px;" width="16" height="19" viewBox="0 0 16 19"><path d="M1.2 0.6 H10.3 L14.8 5.1 V18 Q14.8 18.6 14.2 18.6 H1.8 Q1.2 18.6 1.2 18Z" fill="#f9f9f9" stroke="#e0e0e0" stroke-width="0.7"/><path d="M10.3 0.6 V5.1 H14.8" fill="#ededed" stroke="#e0e0e0" stroke-width="0.6"/><rect x="3.5" y="7" width="7.5" height="3" fill="#92b8ee"/><rect x="3.5" y="10" width="7.5" height="2.6" fill="#3f4a5a"/><rect x="3.5" y="10.4" width="3" height="1.4" fill="#5a8ad0"/><rect x="4" y="13" width="6" height="0.7" fill="#b0b0b0"/></svg>
<div class="t" style="left:63.50px;top:36.55px;font-size:19px;color:#1c1c1c;font-weight:normal;">seta<span class="el">...</span>e (2)</div>
<div class="t" style="left:185.00px;top:36.55px;font-size:19px;color:#1c1c1c;font-weight:normal;">png</div>
<div class="t" style="right:1117.00px;top:36.55px;font-size:19px;color:#1c1c1c;font-weight:normal;">117 KB</div>
<div class="t" style="left:345.50px;top:36.55px;font-size:19px;color:#1c1c1c;font-weight:normal;">25.01.2025, 18:52</div>
<div class="t" style="left:543.50px;top:36.55px;font-size:19px;color:#1c1c1c;font-weight:normal;">PNG image</div>
<svg class="abs" style="left:34.50px;top:62.66px;" width="16" height="19" viewBox="0 0 16 19"><path d="M1.2 0.6 H10.3 L14.8 5.1 V18 Q14.8 18.6 14.2 18.6 H1.8 Q1.2 18.6 1.2 18Z" fill="#f9f9f9" stroke="#e0e0e0" stroke-width="0.7"/><path d="M10.3 0.6 V5.1 H14.8" fill="#ededed" stroke="#e0e0e0" stroke-width="0.6"/><rect x="3.5" y="7" width="7.5" height="3" fill="#92b8ee"/><rect x="3.5" y="10" width="7.5" height="2.6" fill="#3f4a5a"/><rect x="3.5" y="10.4" width="3" height="1.4" fill="#5a8ad0"/><rect x="4" y="13" width="6" height="0.7" fill="#b0b0b0"/></svg>
<div class="t" style="left:63.50px;top:62.48px;font-size:19px;color:#1c1c1c;font-weight:normal;">seta<span class="el">...</span>(1)</div>
<div class="t" style="left:185.00px;top:62.48px;font-size:19px;color:#1c1c1c;font-weight:normal;">png</div>
<div class="t" style="right:1117.00px;top:62.48px;font-size:19px;color:#1c1c1c;font-weight:normal;">93 KB</div>
<div class="t" style="left:345.50px;top:62.48px;font-size:19px;color:#1c1c1c;font-weight:normal;">25.01.2025, 18:51</div>
<div class="t" style="left:543.50px;top:62.48px;font-size:19px;color:#1c1c1c;font-weight:normal;">PNG image</div>
<svg class="abs" style="left:34.50px;top:88.59px;" width="16" height="19" viewBox="0 0 16 19"><path d="M1.2 0.6 H10.3 L14.8 5.1 V18 Q14.8 18.6 14.2 18.6 H1.8 Q1.2 18.6 1.2 18Z" fill="#f9f9f9" stroke="#e0e0e0" stroke-width="0.7"/><path d="M10.3 0.6 V5.1 H14.8" fill="#ededed" stroke="#e0e0e0" stroke-width="0.6"/><rect x="3.5" y="7" width="7.5" height="3" fill="#92b8ee"/><rect x="3.5" y="10" width="7.5" height="2.6" fill="#3f4a5a"/><rect x="3.5" y="10.4" width="3" height="1.4" fill="#5a8ad0"/><rect x="4" y="13" width="6" height="0.7" fill="#b0b0b0"/></svg>
<div class="t" style="left:63.50px;top:88.41px;font-size:19px;color:#1c1c1c;font-weight:normal;">Scre<span class="el">...</span>9.11</div>
<div class="t" style="left:185.00px;top:88.41px;font-size:19px;color:#1c1c1c;font-weight:normal;">png</div>
<div class="t" style="right:1117.00px;top:88.41px;font-size:19px;color:#1c1c1c;font-weight:normal;">570 KB</div>
<div class="t" style="left:345.50px;top:88.41px;font-size:19px;color:#1c1c1c;font-weight:normal;">20.05.2025, 13:39</div>
<div class="t" style="left:543.50px;top:88.41px;font-size:19px;color:#1c1c1c;font-weight:normal;">PNG image</div>
<svg class="abs" style="left:34.50px;top:114.52px;" width="16" height="19" viewBox="0 0 16 19"><path d="M1.2 0.6 H10.3 L14.8 5.1 V18 Q14.8 18.6 14.2 18.6 H1.8 Q1.2 18.6 1.2 18Z" fill="#f9f9f9" stroke="#e0e0e0" stroke-width="0.7"/><path d="M10.3 0.6 V5.1 H14.8" fill="#ededed" stroke="#e0e0e0" stroke-width="0.6"/><rect x="3.5" y="7" width="7.5" height="3" fill="#92b8ee"/><rect x="3.5" y="10" width="7.5" height="2.6" fill="#3f4a5a"/><rect x="3.5" y="10.4" width="3" height="1.4" fill="#5a8ad0"/><rect x="4" y="13" width="6" height="0.7" fill="#b0b0b0"/></svg>
<div class="t" style="left:63.50px;top:114.34px;font-size:19px;color:#1c1c1c;font-weight:normal;">Scre<span class="el">...</span>9.06</div>
<div class="t" style="left:185.00px;top:114.34px;font-size:19px;color:#1c1c1c;font-weight:normal;">png</div>
<div class="t" style="right:1117.00px;top:114.34px;font-size:19px;color:#1c1c1c;font-weight:normal;">463 KB</div>
<div class="t" style="left:345.50px;top:114.34px;font-size:19px;color:#1c1c1c;font-weight:normal;">20.05.2025, 13:39</div>
<div class="t" style="left:543.50px;top:114.34px;font-size:19px;color:#1c1c1c;font-weight:normal;">PNG image</div>
<svg class="abs" style="left:34.50px;top:140.45px;" width="16" height="19" viewBox="0 0 16 19"><path d="M1.2 0.6 H10.3 L14.8 5.1 V18 Q14.8 18.6 14.2 18.6 H1.8 Q1.2 18.6 1.2 18Z" fill="#f9f9f9" stroke="#e0e0e0" stroke-width="0.7"/><path d="M10.3 0.6 V5.1 H14.8" fill="#ededed" stroke="#e0e0e0" stroke-width="0.6"/><rect x="3.5" y="7" width="7.5" height="3" fill="#92b8ee"/><rect x="3.5" y="10" width="7.5" height="2.6" fill="#3f4a5a"/><rect x="3.5" y="10.4" width="3" height="1.4" fill="#5a8ad0"/><rect x="4" y="13" width="6" height="0.7" fill="#b0b0b0"/></svg>
<div class="t" style="left:63.50px;top:140.27px;font-size:19px;color:#1c1c1c;font-weight:normal;">Scre<span class="el">...</span>6.18</div>
<div class="t" style="left:185.00px;top:140.27px;font-size:19px;color:#1c1c1c;font-weight:normal;">png</div>
<div class="t" style="right:1117.00px;top:140.27px;font-size:19px;color:#1c1c1c;font-weight:normal;">351 KB</div>
<div class="t" style="left:345.50px;top:140.27px;font-size:19px;color:#1c1c1c;font-weight:normal;">20.05.2025, 12:26</div>
<div class="t" style="left:543.50px;top:140.27px;font-size:19px;color:#1c1c1c;font-weight:normal;">PNG image</div>
<svg class="abs" style="left:34.50px;top:166.38px;" width="16" height="19" viewBox="0 0 16 19"><path d="M1.2 0.6 H10.3 L14.8 5.1 V18 Q14.8 18.6 14.2 18.6 H1.8 Q1.2 18.6 1.2 18Z" fill="#f9f9f9" stroke="#e0e0e0" stroke-width="0.7"/><path d="M10.3 0.6 V5.1 H14.8" fill="#ededed" stroke="#e0e0e0" stroke-width="0.6"/><rect x="3.5" y="7" width="7.5" height="3" fill="#92b8ee"/><rect x="3.5" y="10" width="7.5" height="2.6" fill="#3f4a5a"/><rect x="3.5" y="10.4" width="3" height="1.4" fill="#5a8ad0"/><rect x="4" y="13" width="6" height="0.7" fill="#b0b0b0"/></svg>
<div class="t" style="left:63.50px;top:166.20px;font-size:19px;color:#1c1c1c;font-weight:normal;">Scre<span class="el">...</span>4.10</div>
<div class="t" style="left:185.00px;top:166.20px;font-size:19px;color:#1c1c1c;font-weight:normal;">png</div>
<div class="t" style="right:1117.00px;top:166.20px;font-size:19px;color:#1c1c1c;font-weight:normal;">337 KB</div>
<div class="t" style="left:345.50px;top:166.20px;font-size:19px;color:#1c1c1c;font-weight:normal;">20.05.2025, 12:24</div>
<div class="t" style="left:543.50px;top:166.20px;font-size:19px;color:#1c1c1c;font-weight:normal;">PNG image</div>
<svg class="abs" style="left:34.50px;top:192.31px;" width="16" height="19" viewBox="0 0 16 19"><path d="M1.2 0.6 H10.3 L14.8 5.1 V18 Q14.8 18.6 14.2 18.6 H1.8 Q1.2 18.6 1.2 18Z" fill="#f9f9f9" stroke="#e0e0e0" stroke-width="0.7"/><path d="M10.3 0.6 V5.1 H14.8" fill="#ededed" stroke="#e0e0e0" stroke-width="0.6"/><rect x="3.5" y="7" width="7.5" height="3" fill="#92b8ee"/><rect x="3.5" y="10" width="7.5" height="2.6" fill="#3f4a5a"/><rect x="3.5" y="10.4" width="3" height="1.4" fill="#5a8ad0"/><rect x="4" y="13" width="6" height="0.7" fill="#b0b0b0"/></svg>
<div class="t" style="left:63.50px;top:192.13px;font-size:19px;color:#1c1c1c;font-weight:normal;">Scre<span class="el">...</span>4.05</div>
<div class="t" style="left:185.00px;top:192.13px;font-size:19px;color:#1c1c1c;font-weight:normal;">png</div>
<div class="t" style="right:1117.00px;top:192.13px;font-size:19px;color:#1c1c1c;font-weight:normal;">2,6 MB</div>
<div class="t" style="left:345.50px;top:192.13px;font-size:19px;color:#1c1c1c;font-weight:normal;">19.05.2025, 13:34</div>
<div class="t" style="left:543.50px;top:192.13px;font-size:19px;color:#1c1c1c;font-weight:normal;">PNG image</div>
<svg class="abs" style="left:34.50px;top:218.24px;" width="16" height="19" viewBox="0 0 16 19"><path d="M1.2 0.6 H10.3 L14.8 5.1 V18 Q14.8 18.6 14.2 18.6 H1.8 Q1.2 18.6 1.2 18Z" fill="#f9f9f9" stroke="#e0e0e0" stroke-width="0.7"/><path d="M10.3 0.6 V5.1 H14.8" fill="#ededed" stroke="#e0e0e0" stroke-width="0.6"/><rect x="3.5" y="7" width="7.5" height="3" fill="#92b8ee"/><rect x="3.5" y="10" width="7.5" height="2.6" fill="#3f4a5a"/><rect x="3.5" y="10.4" width="3" height="1.4" fill="#5a8ad0"/><rect x="4" y="13" width="6" height="0.7" fill="#b0b0b0"/></svg>
<div class="t" style="left:63.50px;top:218.06px;font-size:19px;color:#1c1c1c;font-weight:normal;">Scre<span class="el">...</span>1.01</div>
<div class="t" style="left:185.00px;top:218.06px;font-size:19px;color:#1c1c1c;font-weight:normal;">png</div>
<div class="t" style="right:1117.00px;top:218.06px;font-size:19px;color:#1c1c1c;font-weight:normal;">575 KB</div>
<div class="t" style="left:345.50px;top:218.06px;font-size:19px;color:#1c1c1c;font-weight:normal;">19.05.2025, 11:11</div>
<div class="t" style="left:543.50px;top:218.06px;font-size:19px;color:#1c1c1c;font-weight:normal;">PNG image</div>
<svg class="abs" style="left:34.50px;top:244.17px;" width="16" height="19" viewBox="0 0 16 19"><path d="M1.2 0.6 H10.3 L14.8 5.1 V18 Q14.8 18.6 14.2 18.6 H1.8 Q1.2 18.6 1.2 18Z" fill="#f9f9f9" stroke="#e0e0e0" stroke-width="0.7"/><path d="M10.3 0.6 V5.1 H14.8" fill="#ededed" stroke="#e0e0e0" stroke-width="0.6"/><rect x="3.5" y="7" width="7.5" height="3" fill="#92b8ee"/><rect x="3.5" y="10" width="7.5" height="2.6" fill="#3f4a5a"/><rect x="3.5" y="10.4" width="3" height="1.4" fill="#5a8ad0"/><rect x="4" y="13" width="6" height="0.7" fill="#b0b0b0"/></svg>
<div class="t" style="left:63.50px;top:243.99px;font-size:19px;color:#1c1c1c;font-weight:normal;">Scre<span class="el">...</span>6.51</div>
<div class="t" style="left:185.00px;top:243.99px;font-size:19px;color:#1c1c1c;font-weight:normal;">png</div>
<div class="t" style="right:1117.00px;top:243.99px;font-size:19px;color:#1c1c1c;font-weight:normal;">546 KB</div>
<div class="t" style="left:345.50px;top:243.99px;font-size:19px;color:#1c1c1c;font-weight:normal;">19.05.2025, 11:06</div>
<div class="t" style="left:543.50px;top:243.99px;font-size:19px;color:#1c1c1c;font-weight:normal;">PNG image</div>
<svg class="abs" style="left:34.50px;top:270.10px;" width="16" height="19" viewBox="0 0 16 19"><path d="M1.2 0.6 H10.3 L14.8 5.1 V18 Q14.8 18.6 14.2 18.6 H1.8 Q1.2 18.6 1.2 18Z" fill="#f9f9f9" stroke="#e0e0e0" stroke-width="0.7"/><path d="M10.3 0.6 V5.1 H14.8" fill="#ededed" stroke="#e0e0e0" stroke-width="0.6"/><rect x="3.5" y="7" width="7.5" height="3" fill="#92b8ee"/><rect x="3.5" y="10" width="7.5" height="2.6" fill="#3f4a5a"/><rect x="3.5" y="10.4" width="3" height="1.4" fill="#5a8ad0"/><rect x="4" y="13" width="6" height="0.7" fill="#b0b0b0"/></svg>
<div class="t" style="left:63.50px;top:269.92px;font-size:19px;color:#1c1c1c;font-weight:normal;">Scre<span class="el">...</span>7.04</div>
<div class="t" style="left:185.00px;top:269.92px;font-size:19px;color:#1c1c1c;font-weight:normal;">png</div>
<div class="t" style="right:1117.00px;top:269.92px;font-size:19px;color:#1c1c1c;font-weight:normal;">307 KB</div>
<div class="t" style="left:345.50px;top:269.92px;font-size:19px;color:#1c1c1c;font-weight:normal;">16.05.2025, 14:37</div>
<div class="t" style="left:543.50px;top:269.92px;font-size:19px;color:#1c1c1c;font-weight:normal;">PNG image</div>
<svg class="abs" style="left:34.50px;top:296.03px;" width="16" height="19" viewBox="0 0 16 19"><path d="M1.2 0.6 H10.3 L14.8 5.1 V18 Q14.8 18.6 14.2 18.6 H1.8 Q1.2 18.6 1.2 18Z" fill="#f9f9f9" stroke="#e0e0e0" stroke-width="0.7"/><path d="M10.3 0.6 V5.1 H14.8" fill="#ededed" stroke="#e0e0e0" stroke-width="0.6"/><rect x="3.5" y="7" width="7.5" height="3" fill="#92b8ee"/><rect x="3.5" y="10" width="7.5" height="2.6" fill="#3f4a5a"/><rect x="3.5" y="10.4" width="3" height="1.4" fill="#5a8ad0"/><rect x="4" y="13" width="6" height="0.7" fill="#b0b0b0"/></svg>
<div class="t" style="left:63.50px;top:295.85px;font-size:19px;color:#1c1c1c;font-weight:normal;">Scre<span class="el">...</span>6.06</div>
<div class="t" style="left:185.00px;top:295.85px;font-size:19px;color:#1c1c1c;font-weight:normal;">png</div>
<div class="t" style="right:1117.00px;top:295.85px;font-size:19px;color:#1c1c1c;font-weight:normal;">461 KB</div>
<div class="t" style="left:345.50px;top:295.85px;font-size:19px;color:#1c1c1c;font-weight:normal;">16.05.2025, 14:36</div>
<div class="t" style="left:543.50px;top:295.85px;font-size:19px;color:#1c1c1c;font-weight:normal;">PNG image</div>
<svg class="abs" style="left:34.50px;top:321.96px;" width="16" height="19" viewBox="0 0 16 19"><path d="M1.2 0.6 H10.3 L14.8 5.1 V18 Q14.8 18.6 14.2 18.6 H1.8 Q1.2 18.6 1.2 18Z" fill="#f9f9f9" stroke="#e0e0e0" stroke-width="0.7"/><path d="M10.3 0.6 V5.1 H14.8" fill="#ededed" stroke="#e0e0e0" stroke-width="0.6"/><rect x="3.5" y="7" width="7.5" height="3" fill="#92b8ee"/><rect x="3.5" y="10" width="7.5" height="2.6" fill="#3f4a5a"/><rect x="3.5" y="10.4" width="3" height="1.4" fill="#5a8ad0"/><rect x="4" y="13" width="6" height="0.7" fill="#b0b0b0"/></svg>
<div class="t" style="left:63.50px;top:321.78px;font-size:19px;color:#1c1c1c;font-weight:normal;">Scre<span class="el">...</span>5.09</div>
<div class="t" style="left:185.00px;top:321.78px;font-size:19px;color:#1c1c1c;font-weight:normal;">png</div>
<div class="t" style="right:1117.00px;top:321.78px;font-size:19px;color:#1c1c1c;font-weight:normal;">850 KB</div>
<div class="t" style="left:345.50px;top:321.78px;font-size:19px;color:#1c1c1c;font-weight:normal;">16.05.2025, 14:35</div>
<div class="t" style="left:543.50px;top:321.78px;font-size:19px;color:#1c1c1c;font-weight:normal;">PNG image</div>
<svg class="abs" style="left:34.50px;top:347.89px;" width="16" height="19" viewBox="0 0 16 19"><path d="M1.2 0.6 H10.3 L14.8 5.1 V18 Q14.8 18.6 14.2 18.6 H1.8 Q1.2 18.6 1.2 18Z" fill="#f9f9f9" stroke="#e0e0e0" stroke-width="0.7"/><path d="M10.3 0.6 V5.1 H14.8" fill="#ededed" stroke="#e0e0e0" stroke-width="0.6"/><rect x="3.5" y="7" width="7.5" height="3" fill="#92b8ee"/><rect x="3.5" y="10" width="7.5" height="2.6" fill="#3f4a5a"/><rect x="3.5" y="10.4" width="3" height="1.4" fill="#5a8ad0"/><rect x="4" y="13" width="6" height="0.7" fill="#b0b0b0"/></svg>
<div class="t" style="left:63.50px;top:347.71px;font-size:19px;color:#1c1c1c;font-weight:normal;">Scre<span class="el">...</span>8.02</div>
<div class="t" style="left:185.00px;top:347.71px;font-size:19px;color:#1c1c1c;font-weight:normal;">png</div>
<div class="t" style="right:1117.00px;top:347.71px;font-size:19px;color:#1c1c1c;font-weight:normal;">112 KB</div>
<div class="t" style="left:345.50px;top:347.71px;font-size:19px;color:#1c1c1c;font-weight:normal;">16.05.2025, 12:08</div>
<div class="t" style="left:543.50px;top:347.71px;font-size:19px;color:#1c1c1c;font-weight:normal;">PNG image</div>
<svg class="abs" style="left:34.50px;top:373.82px;" width="16" height="19" viewBox="0 0 16 19"><path d="M1.2 0.6 H10.3 L14.8 5.1 V18 Q14.8 18.6 14.2 18.6 H1.8 Q1.2 18.6 1.2 18Z" fill="#f9f9f9" stroke="#e0e0e0" stroke-width="0.7"/><path d="M10.3 0.6 V5.1 H14.8" fill="#ededed" stroke="#e0e0e0" stroke-width="0.6"/><rect x="3.5" y="7" width="7.5" height="3" fill="#92b8ee"/><rect x="3.5" y="10" width="7.5" height="2.6" fill="#3f4a5a"/><rect x="3.5" y="10.4" width="3" height="1.4" fill="#5a8ad0"/><rect x="4" y="13" width="6" height="0.7" fill="#b0b0b0"/></svg>
<div class="t" style="left:63.50px;top:373.64px;font-size:19px;color:#1c1c1c;font-weight:normal;">Scre<span class="el">...</span>8.16</div>
<div class="t" style="left:185.00px;top:373.64px;font-size:19px;color:#1c1c1c;font-weight:normal;">png</div>
<div class="t" style="right:1117.00px;top:373.64px;font-size:19px;color:#1c1c1c;font-weight:normal;">706 KB</div>
<div class="t" style="left:345.50px;top:373.64px;font-size:19px;color:#1c1c1c;font-weight:normal;">15.05.2025, 15:58</div>
<div class="t" style="left:543.50px;top:373.64px;font-size:19px;color:#1c1c1c;font-weight:normal;">PNG image</div>
<svg class="abs" style="left:34.50px;top:399.75px;" width="16" height="19" viewBox="0 0 16 19"><path d="M1.2 0.6 H10.3 L14.8 5.1 V18 Q14.8 18.6 14.2 18.6 H1.8 Q1.2 18.6 1.2 18Z" fill="#f9f9f9" stroke="#e0e0e0" stroke-width="0.7"/><path d="M10.3 0.6 V5.1 H14.8" fill="#ededed" stroke="#e0e0e0" stroke-width="0.6"/><rect x="3.5" y="7" width="7.5" height="3" fill="#92b8ee"/><rect x="3.5" y="10" width="7.5" height="2.6" fill="#3f4a5a"/><rect x="3.5" y="10.4" width="3" height="1.4" fill="#5a8ad0"/><rect x="4" y="13" width="6" height="0.7" fill="#b0b0b0"/></svg>
<div class="t" style="left:63.50px;top:399.57px;font-size:19px;color:#1c1c1c;font-weight:normal;">Scre<span class="el">...</span>1.00</div>
<div class="t" style="left:185.00px;top:399.57px;font-size:19px;color:#1c1c1c;font-weight:normal;">png</div>
<div class="t" style="right:1117.00px;top:399.57px;font-size:19px;color:#1c1c1c;font-weight:normal;">782 KB</div>
<div class="t" style="left:345.50px;top:399.57px;font-size:19px;color:#1c1c1c;font-weight:normal;">14.05.2025, 12:51</div>
<div class="t" style="left:543.50px;top:399.57px;font-size:19px;color:#1c1c1c;font-weight:normal;">PNG image</div>
<svg class="abs" style="left:34.50px;top:425.68px;" width="16" height="19" viewBox="0 0 16 19"><path d="M1.2 0.6 H10.3 L14.8 5.1 V18 Q14.8 18.6 14.2 18.6 H1.8 Q1.2 18.6 1.2 18Z" fill="#f9f9f9" stroke="#e0e0e0" stroke-width="0.7"/><path d="M10.3 0.6 V5.1 H14.8" fill="#ededed" stroke="#e0e0e0" stroke-width="0.6"/><rect x="3.5" y="7" width="7.5" height="3" fill="#92b8ee"/><rect x="3.5" y="10" width="7.5" height="2.6" fill="#3f4a5a"/><rect x="3.5" y="10.4" width="3" height="1.4" fill="#5a8ad0"/><rect x="4" y="13" width="6" height="0.7" fill="#b0b0b0"/></svg>
<div class="t" style="left:63.50px;top:425.50px;font-size:19px;color:#1c1c1c;font-weight:normal;">Scre<span class="el">...</span>6.11</div>
<div class="t" style="left:185.00px;top:425.50px;font-size:19px;color:#1c1c1c;font-weight:normal;">png</div>
<div class="t" style="right:1117.00px;top:425.50px;font-size:19px;color:#1c1c1c;font-weight:normal;">277 KB</div>
<div class="t" style="left:345.50px;top:425.50px;font-size:19px;color:#1c1c1c;font-weight:normal;">14.05.2025, 12:26</div>
<div class="t" style="left:543.50px;top:425.50px;font-size:19px;color:#1c1c1c;font-weight:normal;">PNG image</div>
<svg class="abs" style="left:34.50px;top:451.61px;" width="16" height="19" viewBox="0 0 16 19"><path d="M1.2 0.6 H10.3 L14.8 5.1 V18 Q14.8 18.6 14.2 18.6 H1.8 Q1.2 18.6 1.2 18Z" fill="#f9f9f9" stroke="#e0e0e0" stroke-width="0.7"/><path d="M10.3 0.6 V5.1 H14.8" fill="#ededed" stroke="#e0e0e0" stroke-width="0.6"/><rect x="3.5" y="7" width="7.5" height="3" fill="#92b8ee"/><rect x="3.5" y="10" width="7.5" height="2.6" fill="#3f4a5a"/><rect x="3.5" y="10.4" width="3" height="1.4" fill="#5a8ad0"/><rect x="4" y="13" width="6" height="0.7" fill="#b0b0b0"/></svg>
<div class="t" style="left:63.50px;top:451.43px;font-size:19px;color:#1c1c1c;font-weight:normal;">Scre<span class="el">...</span>5.57</div>
<div class="t" style="left:185.00px;top:451.43px;font-size:19px;color:#1c1c1c;font-weight:normal;">png</div>
<div class="t" style="right:1117.00px;top:451.43px;font-size:19px;color:#1c1c1c;font-weight:normal;">144 KB</div>
<div class="t" style="left:345.50px;top:451.43px;font-size:19px;color:#1c1c1c;font-weight:normal;">14.05.2025, 12:26</div>
<div class="t" style="left:543.50px;top:451.43px;font-size:19px;color:#1c1c1c;font-weight:normal;">PNG image</div>
<svg class="abs" style="left:34.50px;top:477.54px;" width="16" height="19" viewBox="0 0 16 19"><path d="M1.2 0.6 H10.3 L14.8 5.1 V18 Q14.8 18.6 14.2 18.6 H1.8 Q1.2 18.6 1.2 18Z" fill="#f9f9f9" stroke="#e0e0e0" stroke-width="0.7"/><path d="M10.3 0.6 V5.1 H14.8" fill="#ededed" stroke="#e0e0e0" stroke-width="0.6"/><rect x="3.5" y="7" width="7.5" height="3" fill="#92b8ee"/><rect x="3.5" y="10" width="7.5" height="2.6" fill="#3f4a5a"/><rect x="3.5" y="10.4" width="3" height="1.4" fill="#5a8ad0"/><rect x="4" y="13" width="6" height="0.7" fill="#b0b0b0"/></svg>
<div class="t" style="left:63.50px;top:477.36px;font-size:19px;color:#1c1c1c;font-weight:normal;">Scre<span class="el">...</span>5.49</div>
<div class="t" style="left:185.00px;top:477.36px;font-size:19px;color:#1c1c1c;font-weight:normal;">png</div>
<div class="t" style="right:1117.00px;top:477.36px;font-size:19px;color:#1c1c1c;font-weight:normal;">283 KB</div>
<div class="t" style="left:345.50px;top:477.36px;font-size:19px;color:#1c1c1c;font-weight:normal;">14.05.2025, 12:25</div>
<div class="t" style="left:543.50px;top:477.36px;font-size:19px;color:#1c1c1c;font-weight:normal;">PNG image</div>
<svg class="abs" style="left:34.50px;top:503.47px;" width="16" height="19" viewBox="0 0 16 19"><path d="M1.2 0.6 H10.3 L14.8 5.1 V18 Q14.8 18.6 14.2 18.6 H1.8 Q1.2 18.6 1.2 18Z" fill="#f9f9f9" stroke="#e0e0e0" stroke-width="0.7"/><path d="M10.3 0.6 V5.1 H14.8" fill="#ededed" stroke="#e0e0e0" stroke-width="0.6"/><rect x="3.5" y="7" width="7.5" height="3" fill="#92b8ee"/><rect x="3.5" y="10" width="7.5" height="2.6" fill="#3f4a5a"/><rect x="3.5" y="10.4" width="3" height="1.4" fill="#5a8ad0"/><rect x="4" y="13" width="6" height="0.7" fill="#b0b0b0"/></svg>
<div class="t" style="left:63.50px;top:503.29px;font-size:19px;color:#1c1c1c;font-weight:normal;">Scre<span class="el">...</span>5.43</div>
<div class="t" style="left:185.00px;top:503.29px;font-size:19px;color:#1c1c1c;font-weight:normal;">png</div>
<div class="t" style="right:1117.00px;top:503.29px;font-size:19px;color:#1c1c1c;font-weight:normal;">230 KB</div>
<div class="t" style="left:345.50px;top:503.29px;font-size:19px;color:#1c1c1c;font-weight:normal;">14.05.2025, 12:25</div>
<div class="t" style="left:543.50px;top:503.29px;font-size:19px;color:#1c1c1c;font-weight:normal;">PNG image</div>
<svg class="abs" style="left:34.50px;top:529.40px;" width="16" height="19" viewBox="0 0 16 19"><path d="M1.2 0.6 H10.3 L14.8 5.1 V18 Q14.8 18.6 14.2 18.6 H1.8 Q1.2 18.6 1.2 18Z" fill="#f9f9f9" stroke="#e0e0e0" stroke-width="0.7"/><path d="M10.3 0.6 V5.1 H14.8" fill="#ededed" stroke="#e0e0e0" stroke-width="0.6"/><rect x="3.5" y="7" width="7.5" height="3" fill="#92b8ee"/><rect x="3.5" y="10" width="7.5" height="2.6" fill="#3f4a5a"/><rect x="3.5" y="10.4" width="3" height="1.4" fill="#5a8ad0"/><rect x="4" y="13" width="6" height="0.7" fill="#b0b0b0"/></svg>
<div class="t" style="left:63.50px;top:529.22px;font-size:19px;color:#1c1c1c;font-weight:normal;">Scre<span class="el">...</span>5.33</div>
<div class="t" style="left:185.00px;top:529.22px;font-size:19px;color:#1c1c1c;font-weight:normal;">png</div>
<div class="t" style="right:1117.00px;top:529.22px;font-size:19px;color:#1c1c1c;font-weight:normal;">1 MB</div>
<div class="t" style="left:345.50px;top:529.22px;font-size:19px;color:#1c1c1c;font-weight:normal;">14.05.2025, 12:25</div>
<div class="t" style="left:543.50px;top:529.22px;font-size:19px;color:#1c1c1c;font-weight:normal;">PNG image</div>
<svg class="abs" style="left:34.50px;top:555.33px;" width="16" height="19" viewBox="0 0 16 19"><path d="M1.2 0.6 H10.3 L14.8 5.1 V18 Q14.8 18.6 14.2 18.6 H1.8 Q1.2 18.6 1.2 18Z" fill="#f9f9f9" stroke="#e0e0e0" stroke-width="0.7"/><path d="M10.3 0.6 V5.1 H14.8" fill="#ededed" stroke="#e0e0e0" stroke-width="0.6"/><rect x="3.5" y="7" width="7.5" height="3" fill="#92b8ee"/><rect x="3.5" y="10" width="7.5" height="2.6" fill="#3f4a5a"/><rect x="3.5" y="10.4" width="3" height="1.4" fill="#5a8ad0"/><rect x="4" y="13" width="6" height="0.7" fill="#b0b0b0"/></svg>
<div class="t" style="left:63.50px;top:555.15px;font-size:19px;color:#1c1c1c;font-weight:normal;">Scre<span class="el">...</span>4.29</div>
<div class="t" style="left:185.00px;top:555.15px;font-size:19px;color:#1c1c1c;font-weight:normal;">png</div>
<div class="t" style="right:1117.00px;top:555.15px;font-size:19px;color:#1c1c1c;font-weight:normal;">3,8 MB</div>
<div class="t" style="left:345.50px;top:555.15px;font-size:19px;color:#1c1c1c;font-weight:normal;">14.05.2025, 11:54</div>
<div class="t" style="left:543.50px;top:555.15px;font-size:19px;color:#1c1c1c;font-weight:normal;">PNG image</div>
<svg class="abs" style="left:34.50px;top:581.26px;" width="16" height="19" viewBox="0 0 16 19"><path d="M1.2 0.6 H10.3 L14.8 5.1 V18 Q14.8 18.6 14.2 18.6 H1.8 Q1.2 18.6 1.2 18Z" fill="#f9f9f9" stroke="#e0e0e0" stroke-width="0.7"/><path d="M10.3 0.6 V5.1 H14.8" fill="#ededed" stroke="#e0e0e0" stroke-width="0.6"/><rect x="3.5" y="7" width="7.5" height="3" fill="#92b8ee"/><rect x="3.5" y="10" width="7.5" height="2.6" fill="#3f4a5a"/><rect x="3.5" y="10.4" width="3" height="1.4" fill="#5a8ad0"/><rect x="4" y="13" width="6" height="0.7" fill="#b0b0b0"/></svg>
<div class="t" style="left:63.50px;top:581.08px;font-size:19px;color:#1c1c1c;font-weight:normal;">Scre<span class="el">...</span>.40</div>
<div class="t" style="left:185.00px;top:581.08px;font-size:19px;color:#1c1c1c;font-weight:normal;">png</div>
<div class="t" style="right:1117.00px;top:581.08px;font-size:19px;color:#1c1c1c;font-weight:normal;">905 KB</div>
<div class="t" style="left:345.50px;top:581.08px;font-size:19px;color:#1c1c1c;font-weight:normal;">14.05.2025, 11:44</div>
<div class="t" style="left:543.50px;top:581.08px;font-size:19px;color:#1c1c1c;font-weight:normal;">PNG image</div>
<svg class="abs" style="left:34.50px;top:607.19px;" width="16" height="19" viewBox="0 0 16 19"><path d="M1.2 0.6 H10.3 L14.8 5.1 V18 Q14.8 18.6 14.2 18.6 H1.8 Q1.2 18.6 1.2 18Z" fill="#f9f9f9" stroke="#e0e0e0" stroke-width="0.7"/><path d="M10.3 0.6 V5.1 H14.8" fill="#ededed" stroke="#e0e0e0" stroke-width="0.6"/><rect x="3.5" y="7" width="7.5" height="3" fill="#92b8ee"/><rect x="3.5" y="10" width="7.5" height="2.6" fill="#3f4a5a"/><rect x="3.5" y="10.4" width="3" height="1.4" fill="#5a8ad0"/><rect x="4" y="13" width="6" height="0.7" fill="#b0b0b0"/></svg>
<div class="t" style="left:63.50px;top:607.01px;font-size:19px;color:#1c1c1c;font-weight:normal;">Scre<span class="el">...</span>4.36</div>
<div class="t" style="left:185.00px;top:607.01px;font-size:19px;color:#1c1c1c;font-weight:normal;">png</div>
<div class="t" style="right:1117.00px;top:607.01px;font-size:19px;color:#1c1c1c;font-weight:normal;">907 KB</div>
<div class="t" style="left:345.50px;top:607.01px;font-size:19px;color:#1c1c1c;font-weight:normal;">14.05.2025, 11:44</div>
<div class="t" style="left:543.50px;top:607.01px;font-size:19px;color:#1c1c1c;font-weight:normal;">PNG image</div>
<svg class="abs" style="left:34.50px;top:633.12px;" width="16" height="19" viewBox="0 0 16 19"><path d="M1.2 0.6 H10.3 L14.8 5.1 V18 Q14.8 18.6 14.2 18.6 H1.8 Q1.2 18.6 1.2 18Z" fill="#f9f9f9" stroke="#e0e0e0" stroke-width="0.7"/><path d="M10.3 0.6 V5.1 H14.8" fill="#ededed" stroke="#e0e0e0" stroke-width="0.6"/><rect x="3.5" y="7" width="7.5" height="3" fill="#92b8ee"/><rect x="3.5" y="10" width="7.5" height="2.6" fill="#3f4a5a"/><rect x="3.5" y="10.4" width="3" height="1.4" fill="#5a8ad0"/><rect x="4" y="13" width="6" height="0.7" fill="#b0b0b0"/></svg>
<div class="t" style="left:63.50px;top:632.94px;font-size:19px;color:#1c1c1c;font-weight:normal;">Scre<span class="el">...</span>9.09</div>
<div class="t" style="left:185.00px;top:632.94px;font-size:19px;color:#1c1c1c;font-weight:normal;">png</div>
<div class="t" style="right:1117.00px;top:632.94px;font-size:19px;color:#1c1c1c;font-weight:normal;">702 KB</div>
<div class="t" style="left:345.50px;top:632.94px;font-size:19px;color:#1c1c1c;font-weight:normal;">14.05.2025, 11:39</div>
<div class="t" style="left:543.50px;top:632.94px;font-size:19px;color:#1c1c1c;font-weight:normal;">PNG image</div>
<svg class="abs" style="left:34.50px;top:659.05px;" width="16" height="19" viewBox="0 0 16 19"><path d="M1.2 0.6 H10.3 L14.8 5.1 V18 Q14.8 18.6 14.2 18.6 H1.8 Q1.2 18.6 1.2 18Z" fill="#f9f9f9" stroke="#e0e0e0" stroke-width="0.7"/><path d="M10.3 0.6 V5.1 H14.8" fill="#ededed" stroke="#e0e0e0" stroke-width="0.6"/><rect x="3.5" y="7" width="7.5" height="3" fill="#92b8ee"/><rect x="3.5" y="10" width="7.5" height="2.6" fill="#3f4a5a"/><rect x="3.5" y="10.4" width="3" height="1.4" fill="#5a8ad0"/><rect x="4" y="13" width="6" height="0.7" fill="#b0b0b0"/></svg>
<div class="t" style="left:63.50px;top:658.87px;font-size:19px;color:#1c1c1c;font-weight:normal;">Scre<span class="el">...</span>3.31</div>
<div class="t" style="left:185.00px;top:658.87px;font-size:19px;color:#1c1c1c;font-weight:normal;">png</div>
<div class="t" style="right:1117.00px;top:658.87px;font-size:19px;color:#1c1c1c;font-weight:normal;">692 KB</div>
<div class="t" style="left:345.50px;top:658.87px;font-size:19px;color:#1c1c1c;font-weight:normal;">14.05.2025, 11:33</div>
<div class="t" style="left:543.50px;top:658.87px;font-size:19px;color:#1c1c1c;font-weight:normal;">PNG image</div>
<svg class="abs" style="left:34.50px;top:684.98px;" width="16" height="19" viewBox="0 0 16 19"><path d="M1.2 0.6 H10.3 L14.8 5.1 V18 Q14.8 18.6 14.2 18.6 H1.8 Q1.2 18.6 1.2 18Z" fill="#f9f9f9" stroke="#e0e0e0" stroke-width="0.7"/><path d="M10.3 0.6 V5.1 H14.8" fill="#ededed" stroke="#e0e0e0" stroke-width="0.6"/><rect x="3.5" y="7" width="7.5" height="3" fill="#92b8ee"/><rect x="3.5" y="10" width="7.5" height="2.6" fill="#3f4a5a"/><rect x="3.5" y="10.4" width="3" height="1.4" fill="#5a8ad0"/><rect x="4" y="13" width="6" height="0.7" fill="#b0b0b0"/></svg>
<div class="t" style="left:63.50px;top:684.80px;font-size:19px;color:#1c1c1c;font-weight:normal;">Scre<span class="el">...</span>4.08</div>
<div class="t" style="left:185.00px;top:684.80px;font-size:19px;color:#1c1c1c;font-weight:normal;">png</div>
<div class="t" style="right:1117.00px;top:684.80px;font-size:19px;color:#1c1c1c;font-weight:normal;">846 KB</div>
<div class="t" style="left:345.50px;top:684.80px;font-size:19px;color:#1c1c1c;font-weight:normal;">13.05.2025, 18:54</div>
<div class="t" style="left:543.50px;top:684.80px;font-size:19px;color:#1c1c1c;font-weight:normal;">PNG image</div>
</div>
<svg class="abs" style="left:758.50px;top:266.80px;width:18.5px;height:17.5px" width="22" height="21" viewBox="0 0 22 21"><path d="M0.5 2 Q0.5 0.5 2 0.5 H8.3 Q9 0.5 9.5 1 L11 2.6 H20 Q21.5 2.6 21.5 4 V19.3 Q21.5 20.7 20 20.7 H2 Q0.5 20.7 0.5 19.3Z" fill="#2490d8"/><path d="M0.5 6.6 Q0.5 5.7 1.4 5.7 H20.6 Q21.5 5.7 21.5 6.6 V19.3 Q21.5 20.7 20 20.7 H2 Q0.5 20.7 0.5 19.3Z" fill="url(#fldg)"/><path d="M6.5 13.5 L11 9.3 L15.5 13.5 M8 12.5 V16.8 H14 V12.5" fill="none" stroke="#5aafec" stroke-width="1.6"/></svg>
<div class="t" style="left:788.50px;top:265.62px;font-size:19px;color:#1c1c1c;font-weight:normal;">..</div>
<div class="t" style="left:952.00px;top:265.62px;font-size:19px;color:#1c1c1c;font-weight:normal;"></div>
<div class="t" style="right:349.00px;top:265.62px;font-size:19px;color:#1c1c1c;font-weight:normal;">DIR</div>
<div class="t" style="left:1112.50px;top:265.62px;font-size:19px;color:#1c1c1c;font-weight:normal;">20.05.2025, 13:42</div>
<div class="t" style="left:1310.50px;top:265.62px;font-size:19px;color:#1c1c1c;font-weight:normal;">folder</div>
<svg class="abs" style="left:758.50px;top:292.73px;width:18.5px;height:17.5px" width="22" height="21" viewBox="0 0 22 21"><path d="M0.5 2 Q0.5 0.5 2 0.5 H8.3 Q9 0.5 9.5 1 L11 2.6 H20 Q21.5 2.6 21.5 4 V19.3 Q21.5 20.7 20 20.7 H2 Q0.5 20.7 0.5 19.3Z" fill="#2490d8"/><path d="M0.5 6.6 Q0.5 5.7 1.4 5.7 H20.6 Q21.5 5.7 21.5 6.6 V19.3 Q21.5 20.7 20 20.7 H2 Q0.5 20.7 0.5 19.3Z" fill="url(#fldg)"/><path d="M8 16.5 L11 9.5 L14 16.5 M7 14.2 H15" fill="none" stroke="#5aafec" stroke-width="1.4"/></svg>
<div class="t" style="left:788.50px;top:291.55px;font-size:19px;color:#1c1c1c;font-weight:normal;">Applications</div>
<div class="t" style="left:952.00px;top:291.55px;font-size:19px;color:#1c1c1c;font-weight:normal;"></div>
<div class="t" style="right:349.00px;top:291.55px;font-size:19px;color:#1c1c1c;font-weight:normal;">DIR</div>
<div class="t" style="left:1112.50px;top:291.55px;font-size:19px;color:#1c1c1c;font-weight:normal;">12.05.2025, 12:27</div>
<div class="t" style="left:1310.50px;top:291.55px;font-size:19px;color:#1c1c1c;font-weight:normal;">folder</div>
<svg class="abs" style="left:758.50px;top:318.66px;width:18.5px;height:17.5px" width="22" height="21" viewBox="0 0 22 21"><path d="M0.5 2 Q0.5 0.5 2 0.5 H8.3 Q9 0.5 9.5 1 L11 2.6 H20 Q21.5 2.6 21.5 4 V19.3 Q21.5 20.7 20 20.7 H2 Q0.5 20.7 0.5 19.3Z" fill="#2490d8"/><path d="M0.5 6.6 Q0.5 5.7 1.4 5.7 H20.6 Q21.5 5.7 21.5 6.6 V19.3 Q21.5 20.7 20 20.7 H2 Q0.5 20.7 0.5 19.3Z" fill="url(#fldg)"/><rect x="6.5" y="9.8" width="9" height="6" rx="0.6" fill="none" stroke="#5aafec" stroke-width="1.5"/><rect x="8.5" y="13.6" width="5" height="1.3" fill="#5aafec"/></svg>
<div class="t" style="left:788.50px;top:317.48px;font-size:19px;color:#1c1c1c;font-weight:normal;">Desktop</div>
<div class="t" style="left:952.00px;top:317.48px;font-size:19px;color:#1c1c1c;font-weight:normal;"></div>
<div class="t" style="right:349.00px;top:317.48px;font-size:19px;color:#1c1c1c;font-weight:normal;">DIR</div>
<div class="t" style="left:1112.50px;top:317.48px;font-size:19px;color:#1c1c1c;font-weight:normal;">20.05.2025, 13:39</div>
<div class="t" style="left:1310.50px;top:317.48px;font-size:19px;color:#1c1c1c;font-weight:normal;">folder</div>
<svg class="abs" style="left:758.50px;top:344.59px;width:18.5px;height:17.5px" width="22" height="21" viewBox="0 0 22 21"><path d="M0.5 2 Q0.5 0.5 2 0.5 H8.3 Q9 0.5 9.5 1 L11 2.6 H20 Q21.5 2.6 21.5 4 V19.3 Q21.5 20.7 20 20.7 H2 Q0.5 20.7 0.5 19.3Z" fill="#2490d8"/><path d="M0.5 6.6 Q0.5 5.7 1.4 5.7 H20.6 Q21.5 5.7 21.5 6.6 V19.3 Q21.5 20.7 20 20.7 H2 Q0.5 20.7 0.5 19.3Z" fill="url(#fldg)"/><path d="M8 9.2 H12.5 L14.5 11.2 V17 H8 Z" fill="none" stroke="#5aafec" stroke-width="1.4"/></svg>
<div class="t" style="left:788.50px;top:343.41px;font-size:19px;color:#1c1c1c;font-weight:normal;">Documents</div>
<div class="t" style="left:952.00px;top:343.41px;font-size:19px;color:#1c1c1c;font-weight:normal;"></div>
<div class="t" style="right:349.00px;top:343.41px;font-size:19px;color:#1c1c1c;font-weight:normal;">DIR</div>
<div class="t" style="left:1112.50px;top:343.41px;font-size:19px;color:#1c1c1c;font-weight:normal;">18.04.2025, 18:49</div>
<div class="t" style="left:1310.50px;top:343.41px;font-size:19px;color:#1c1c1c;font-weight:normal;">folder</div>
<svg class="abs" style="left:758.50px;top:370.52px;width:18.5px;height:17.5px" width="22" height="21" viewBox="0 0 22 21"><path d="M0.5 2 Q0.5 0.5 2 0.5 H8.3 Q9 0.5 9.5 1 L11 2.6 H20 Q21.5 2.6 21.5 4 V19.3 Q21.5 20.7 20 20.7 H2 Q0.5 20.7 0.5 19.3Z" fill="#2490d8"/><path d="M0.5 6.6 Q0.5 5.7 1.4 5.7 H20.6 Q21.5 5.7 21.5 6.6 V19.3 Q21.5 20.7 20 20.7 H2 Q0.5 20.7 0.5 19.3Z" fill="url(#fldg)"/><circle cx="11" cy="13" r="4.5" fill="none" stroke="#5aafec" stroke-width="1.4"/><path d="M11 10.3 V15.3 M9 13.5 L11 15.5 L13 13.5" fill="none" stroke="#5aafec" stroke-width="1.3"/></svg>
<div class="t" style="left:788.50px;top:369.34px;font-size:19px;color:#1c1c1c;font-weight:normal;">Downloads</div>
<div class="t" style="left:952.00px;top:369.34px;font-size:19px;color:#1c1c1c;font-weight:normal;"></div>
<div class="t" style="right:349.00px;top:369.34px;font-size:19px;color:#1c1c1c;font-weight:normal;">DIR</div>
<div class="t" style="left:1112.50px;top:369.34px;font-size:19px;color:#1c1c1c;font-weight:normal;">20.05.2025, 11:53</div>
<div class="t" style="left:1310.50px;top:369.34px;font-size:19px;color:#1c1c1c;font-weight:normal;">folder</div>
<svg class="abs" style="left:758.50px;top:396.45px;width:18.5px;height:17.5px" width="22" height="21" viewBox="0 0 22 21"><path d="M0.5 2 Q0.5 0.5 2 0.5 H8.3 Q9 0.5 9.5 1 L11 2.6 H20 Q21.5 2.6 21.5 4 V19.3 Q21.5 20.7 20 20.7 H2 Q0.5 20.7 0.5 19.3Z" fill="#2490d8"/><path d="M0.5 6.6 Q0.5 5.7 1.4 5.7 H20.6 Q21.5 5.7 21.5 6.6 V19.3 Q21.5 20.7 20 20.7 H2 Q0.5 20.7 0.5 19.3Z" fill="url(#fldg)"/><rect x="7" y="9.8" width="8" height="6.5" fill="none" stroke="#5aafec" stroke-width="1.4"/><path d="M8.8 9.8 V16.3 M13.2 9.8 V16.3" stroke="#5aafec" stroke-width="0.9"/></svg>
<div class="t" style="left:788.50px;top:395.27px;font-size:19px;color:#1c1c1c;font-weight:normal;">Movies</div>
<div class="t" style="left:952.00px;top:395.27px;font-size:19px;color:#1c1c1c;font-weight:normal;"></div>
<div class="t" style="right:349.00px;top:395.27px;font-size:19px;color:#1c1c1c;font-weight:normal;">DIR</div>
<div class="t" style="left:1112.50px;top:395.27px;font-size:19px;color:#1c1c1c;font-weight:normal;">01.04.2025, 11:35</div>
<div class="t" style="left:1310.50px;top:395.27px;font-size:19px;color:#1c1c1c;font-weight:normal;">folder</div>
<svg class="abs" style="left:758.50px;top:422.38px;width:18.5px;height:17.5px" width="22" height="21" viewBox="0 0 22 21"><path d="M0.5 2 Q0.5 0.5 2 0.5 H8.3 Q9 0.5 9.5 1 L11 2.6 H20 Q21.5 2.6 21.5 4 V19.3 Q21.5 20.7 20 20.7 H2 Q0.5 20.7 0.5 19.3Z" fill="#2490d8"/><path d="M0.5 6.6 Q0.5 5.7 1.4 5.7 H20.6 Q21.5 5.7 21.5 6.6 V19.3 Q21.5 20.7 20 20.7 H2 Q0.5 20.7 0.5 19.3Z" fill="url(#fldg)"/><path d="M9.5 15.5 V10 L14 9.2 V14.5" fill="none" stroke="#5aafec" stroke-width="1.4"/><circle cx="8.6" cy="15.6" r="1.4" fill="#5aafec"/><circle cx="13.1" cy="14.6" r="1.4" fill="#5aafec"/></svg>
<div class="t" style="left:788.50px;top:421.20px;font-size:19px;color:#1c1c1c;font-weight:normal;">Music</div>
<div class="t" style="left:952.00px;top:421.20px;font-size:19px;color:#1c1c1c;font-weight:normal;"></div>
<div class="t" style="right:349.00px;top:421.20px;font-size:19px;color:#1c1c1c;font-weight:normal;">DIR</div>
<div class="t" style="left:1112.50px;top:421.20px;font-size:19px;color:#1c1c1c;font-weight:normal;">24.04.2025, 17:28</div>
<div class="t" style="left:1310.50px;top:421.20px;font-size:19px;color:#1c1c1c;font-weight:normal;">folder</div>
<svg class="abs" style="left:758.50px;top:448.31px;width:18.5px;height:17.5px" width="22" height="21" viewBox="0 0 22 21"><path d="M0.5 2 Q0.5 0.5 2 0.5 H8.3 Q9 0.5 9.5 1 L11 2.6 H20 Q21.5 2.6 21.5 4 V19.3 Q21.5 20.7 20 20.7 H2 Q0.5 20.7 0.5 19.3Z" fill="#2490d8"/><path d="M0.5 6.6 Q0.5 5.7 1.4 5.7 H20.6 Q21.5 5.7 21.5 6.6 V19.3 Q21.5 20.7 20 20.7 H2 Q0.5 20.7 0.5 19.3Z" fill="url(#fldg)"/><rect x="6.8" y="9.8" width="8.4" height="6.8" fill="none" stroke="#5aafec" stroke-width="1.4"/><path d="M7.5 15.8 L10 12.8 L12 14.5 L13.3 13.3 L14.8 15.8Z" fill="#5aafec"/></svg>
<div class="t" style="left:788.50px;top:447.13px;font-size:19px;color:#1c1c1c;font-weight:normal;">Pictures</div>
<div class="t" style="left:952.00px;top:447.13px;font-size:19px;color:#1c1c1c;font-weight:normal;"></div>
<div class="t" style="right:349.00px;top:447.13px;font-size:19px;color:#1c1c1c;font-weight:normal;">DIR</div>
<div class="t" style="left:1112.50px;top:447.13px;font-size:19px;color:#1c1c1c;font-weight:normal;">21.03.2025, 12:57</div>
<div class="t" style="left:1310.50px;top:447.13px;font-size:19px;color:#1c1c1c;font-weight:normal;">folder</div>
<svg class="abs" style="left:758.50px;top:474.24px;width:18.5px;height:17.5px" width="22" height="21" viewBox="0 0 22 21"><path d="M0.5 2 Q0.5 0.5 2 0.5 H8.3 Q9 0.5 9.5 1 L11 2.6 H20 Q21.5 2.6 21.5 4 V19.3 Q21.5 20.7 20 20.7 H2 Q0.5 20.7 0.5 19.3Z" fill="#2490d8"/><path d="M0.5 6.6 Q0.5 5.7 1.4 5.7 H20.6 Q21.5 5.7 21.5 6.6 V19.3 Q21.5 20.7 20 20.7 H2 Q0.5 20.7 0.5 19.3Z" fill="url(#fldg)"/><path d="M6.8 16.5 L15.2 16.5 M8 15.8 V10.5 L11 9 L14 10.5 V15.8" fill="none" stroke="#5aafec" stroke-width="1.3"/></svg>
<div class="t" style="left:788.50px;top:473.06px;font-size:19px;color:#1c1c1c;font-weight:normal;">Public</div>
<div class="t" style="left:952.00px;top:473.06px;font-size:19px;color:#1c1c1c;font-weight:normal;"></div>
<div class="t" style="right:349.00px;top:473.06px;font-size:19px;color:#1c1c1c;font-weight:normal;">DIR</div>
<div class="t" style="left:1112.50px;top:473.06px;font-size:19px;color:#1c1c1c;font-weight:normal;">04.07.2024, 12:17</div>
<div class="t" style="left:1310.50px;top:473.06px;font-size:19px;color:#1c1c1c;font-weight:normal;">folder</div>
<svg class="abs" style="left:758.50px;top:500.17px;width:18.5px;height:17.5px" width="22" height="21" viewBox="0 0 22 21"><path d="M0.5 2 Q0.5 0.5 2 0.5 H8.3 Q9 0.5 9.5 1 L11 2.6 H20 Q21.5 2.6 21.5 4 V19.3 Q21.5 20.7 20 20.7 H2 Q0.5 20.7 0.5 19.3Z" fill="#2490d8"/><path d="M0.5 6.6 Q0.5 5.7 1.4 5.7 H20.6 Q21.5 5.7 21.5 6.6 V19.3 Q21.5 20.7 20 20.7 H2 Q0.5 20.7 0.5 19.3Z" fill="url(#fldg)"/></svg>
<div class="t" style="left:788.50px;top:498.99px;font-size:19px;color:#1c1c1c;font-weight:normal;">TaoGit</div>
<div class="t" style="left:952.00px;top:498.99px;font-size:19px;color:#1c1c1c;font-weight:normal;"></div>
<div class="t" style="right:349.00px;top:498.99px;font-size:19px;color:#1c1c1c;font-weight:normal;">DIR</div>
<div class="t" style="left:1112.50px;top:498.99px;font-size:19px;color:#1c1c1c;font-weight:normal;">28.02.2025, 19:57</div>
<div class="t" style="left:1310.50px;top:498.99px;font-size:19px;color:#1c1c1c;font-weight:normal;">folder</div>
<svg class="abs" style="left:759.00px;top:524.90px;" width="17" height="19" viewBox="0 0 17 19"><path d="M1.2 0.6 H10.8 L15.6 5.4 V17.8 Q15.6 18.4 15 18.4 H1.8 Q1.2 18.4 1.2 17.8Z" fill="#f4f4f4" stroke="#e3e3e3" stroke-width="0.7"/><path d="M10.8 0.6 V5.4 H15.6Z" fill="#fff" stroke="#e3e3e3" stroke-width="0.6"/></svg>
<div class="t" style="left:788.50px;top:524.92px;font-size:19px;color:#1c1c1c;font-weight:normal;">duplicates</div>
<div class="t" style="left:952.00px;top:524.92px;font-size:19px;color:#1c1c1c;font-weight:normal;">txt</div>
<div class="t" style="right:349.00px;top:524.92px;font-size:19px;color:#1c1c1c;font-weight:normal;">5 bytes</div>
<div class="t" style="left:1112.50px;top:524.92px;font-size:19px;color:#1c1c1c;font-weight:normal;">18.12.2024, 14:54</div>
<div class="t" style="left:1310.50px;top:524.92px;font-size:19px;color:#1c1c1c;font-weight:normal;">text</div>
<svg class="abs" style="left:759.00px;top:550.83px;" width="17" height="19" viewBox="0 0 17 19"><path d="M1.2 0.6 H10.8 L15.6 5.4 V17.8 Q15.6 18.4 15 18.4 H1.8 Q1.2 18.4 1.2 17.8Z" fill="#f4f4f4" stroke="#e3e3e3" stroke-width="0.7"/><path d="M10.8 0.6 V5.4 H15.6Z" fill="#fff" stroke="#e3e3e3" stroke-width="0.6"/></svg>
<div class="t" style="left:788.50px;top:550.85px;font-size:19px;color:#1c1c1c;font-weight:normal;">New File</div>
<div class="t" style="left:952.00px;top:550.85px;font-size:19px;color:#1c1c1c;font-weight:normal;"></div>
<div class="t" style="right:349.00px;top:550.85px;font-size:19px;color:#1c1c1c;font-weight:normal;">5 bytes</div>
<div class="t" style="left:1112.50px;top:550.85px;font-size:19px;color:#1c1c1c;font-weight:normal;">13.11.2024, 15:53</div>
<div class="t" style="left:1310.50px;top:550.85px;font-size:19px;color:#1c1c1c;font-weight:normal;">data</div>
<svg class="abs" style="left:760.50px;top:576.96px;" width="15" height="18" viewBox="0 0 15 18"><path d="M1 1.8 Q1 0.6 2.2 0.6 H9.5 L14.4 5.4 V16.5 Q14.4 17.6 13.2 17.6 H2.2 Q1 17.6 1 16.5Z" fill="#2b2b2b"/><path d="M5 14.5 V3.5 H9.5 Q12 3.5 12 6.5 Q12 9.5 9 9.5 H5.5" fill="none" stroke="#2aa5b5" stroke-width="1.4"/><circle cx="5" cy="14.5" r="1" fill="#2a7ad0"/><path d="M12.5 16.5 L14.2 14.8 V16.5Z" fill="#f0a030"/></svg>
<div class="t" style="left:788.50px;top:576.78px;font-size:19px;color:#1c1c1c;font-weight:normal;">Pagico Data</div>
<div class="t" style="left:952.00px;top:576.78px;font-size:19px;color:#1c1c1c;font-weight:normal;">pg<span style="letter-spacing:-0.3px">...</span></div>
<div class="t" style="right:349.00px;top:576.78px;font-size:19px;color:#1c1c1c;font-weight:normal;">13 KB</div>
<div class="t" style="left:1112.50px;top:576.78px;font-size:19px;color:#1c1c1c;font-weight:normal;">18.12.2024, 18:00</div>
<div class="t" style="left:1310.50px;top:576.78px;font-size:19px;color:#1c1c1c;font-weight:normal;"></div>
<svg class="abs" style="left:760.50px;top:602.89px;" width="15" height="18" viewBox="0 0 15 18"><path d="M1 1.8 Q1 0.6 2.2 0.6 H9.5 L14.4 5.4 V16.5 Q14.4 17.6 13.2 17.6 H2.2 Q1 17.6 1 16.5Z" fill="#2b2b2b"/><path d="M5 14.5 V3.5 H9.5 Q12 3.5 12 6.5 Q12 9.5 9 9.5 H5.5" fill="none" stroke="#2aa5b5" stroke-width="1.4"/><circle cx="5" cy="14.5" r="1" fill="#2a7ad0"/><path d="M12.5 16.5 L14.2 14.8 V16.5Z" fill="#f0a030"/></svg>
<div class="t" style="left:788.50px;top:602.71px;font-size:19px;color:#1c1c1c;font-weight:normal;">Untitled</div>
<div class="t" style="left:952.00px;top:602.71px;font-size:19px;color:#1c1c1c;font-weight:normal;">pg<span style="letter-spacing:-0.3px">...</span></div>
<div class="t" style="right:349.00px;top:602.71px;font-size:19px;color:#1c1c1c;font-weight:normal;">7 MB</div>
<div class="t" style="left:1112.50px;top:602.71px;font-size:19px;color:#1c1c1c;font-weight:normal;">18.12.2024, 18:00</div>
<div class="t" style="left:1310.50px;top:602.71px;font-size:19px;color:#1c1c1c;font-weight:normal;"></div>
<div class="abs" style="left:698.20px;top:255.00px;width:22.80px;height:689.00px;background:#f9f9f9;border-left:1px solid #ececec"></div>
<div class="abs" style="left:705.00px;top:259.00px;width:12.00px;height:28.00px;background:#c3c3c3;border-radius:6px"></div>
<div class="abs" style="left:721.00px;top:78.50px;width:1.50px;height:896.50px;background:#d9d9d9"></div>
<div class="abs" style="left:0.00px;top:944.00px;width:1440.00px;height:30.00px;background:#fff"></div>
<div class="abs" style="left:0.00px;top:943.50px;width:1440.00px;height:1.00px;background:#e3e3e3"></div>
<div class="t" style="left:-41.50px;width:800px;text-align:center;top:952.21px;font-size:17px;color:#333;font-weight:normal;letter-spacing:0.52px">0 bytes / 945,8 MB in 0 / 941 file(s). 0 / 0 dir(s)</div>
<div class="t" style="left:683.50px;width:800px;text-align:center;top:952.21px;font-size:17px;color:#333;font-weight:normal;letter-spacing:0.52px">0 bytes / 7 MB in 0 / 4 file(s). 0 / 9 dir(s)</div>
<div class="abs" style="left:721.00px;top:944.00px;width:1.50px;height:30.00px;background:#d9d9d9"></div>
<div class="abs" style="left:0.00px;top:973.50px;width:1440.00px;height:1.50px;background:#d5d5d5"></div>
<div class="abs" style="left:0.00px;top:975.00px;width:1440.00px;height:45.50px;background:#f3f2f1"></div>
<div class="t" style="right:960.50px;top:990.92px;font-size:19px;color:#333;font-weight:normal;letter-spacing:0.74px">/Users/yuliiasavliuk/Desktop</div>
<div class="abs" style="left:495.50px;top:983.00px;width:934.50px;height:31.50px;background:#fff;border-radius:7px;box-shadow:0 0 0 0.6px rgba(0,0,0,0.1),0 0.8px 1.2px rgba(0,0,0,0.2)"></div>
<svg class="abs" style="left:1404.00px;top:986.00px;" width="25" height="25" viewBox="0 0 25 25"><rect x="0.3" y="0.3" width="24.4" height="24.4" rx="6" fill="url(#blueg)"/><path d="M8 10.5 L12.5 15 L17 10.5" fill="none" stroke="#fff" stroke-width="2.2" stroke-linecap="round" stroke-linejoin="round"/></svg>
<div class="abs" style="left:0.00px;top:1020.50px;width:1440.00px;height:1.50px;background:#cfcfcf"></div>
<div class="abs" style="left:0.00px;top:1022.00px;width:1440.00px;height:42.00px;background:linear-gradient(#f8f8f7,#f3f3f2)"></div>
<div class="t" style="left:-283.10px;width:800px;text-align:center;top:1036.19px;font-size:19.5px;color:#3c3c3c;font-weight:normal;letter-spacing:0.6px">View - F3</div>
<div class="t" style="left:-41.20px;width:800px;text-align:center;top:1036.19px;font-size:19.5px;color:#3c3c3c;font-weight:normal;letter-spacing:0.6px">Edit - F4</div>
<div class="abs" style="left:237.10px;top:1022.00px;width:1.40px;height:42.00px;background:#bdbdbd"></div>
<div class="t" style="left:200.55px;width:800px;text-align:center;top:1036.19px;font-size:19.5px;color:#3c3c3c;font-weight:normal;letter-spacing:0.6px">Copy - F5</div>
<div class="abs" style="left:479.10px;top:1022.00px;width:1.40px;height:42.00px;background:#bdbdbd"></div>
<div class="t" style="left:442.45px;width:800px;text-align:center;top:1036.19px;font-size:19.5px;color:#3c3c3c;font-weight:normal;letter-spacing:0.6px">Move - F6</div>
<div class="abs" style="left:720.60px;top:1022.00px;width:1.40px;height:42.00px;background:#bdbdbd"></div>
<div class="t" style="left:684.40px;width:800px;text-align:center;top:1036.19px;font-size:19.5px;color:#3c3c3c;font-weight:normal;letter-spacing:0.6px">New Folder - F7</div>
<div class="abs" style="left:962.90px;top:1022.00px;width:1.40px;height:42.00px;background:#bdbdbd"></div>
<div class="t" style="left:926.20px;width:800px;text-align:center;top:1036.19px;font-size:19.5px;color:#3c3c3c;font-weight:normal;letter-spacing:0.6px">Delete - F8</div>
<div class="abs" style="left:1204.50px;top:1022.00px;width:1.40px;height:42.00px;background:#bdbdbd"></div>
<div class="abs" style="left:0;top:0;width:1440px;height:1064px;border-radius:26px;box-shadow:inset 0 0 0 1px rgba(0,0,0,0.13)"></div>
</div>
</body></html>
